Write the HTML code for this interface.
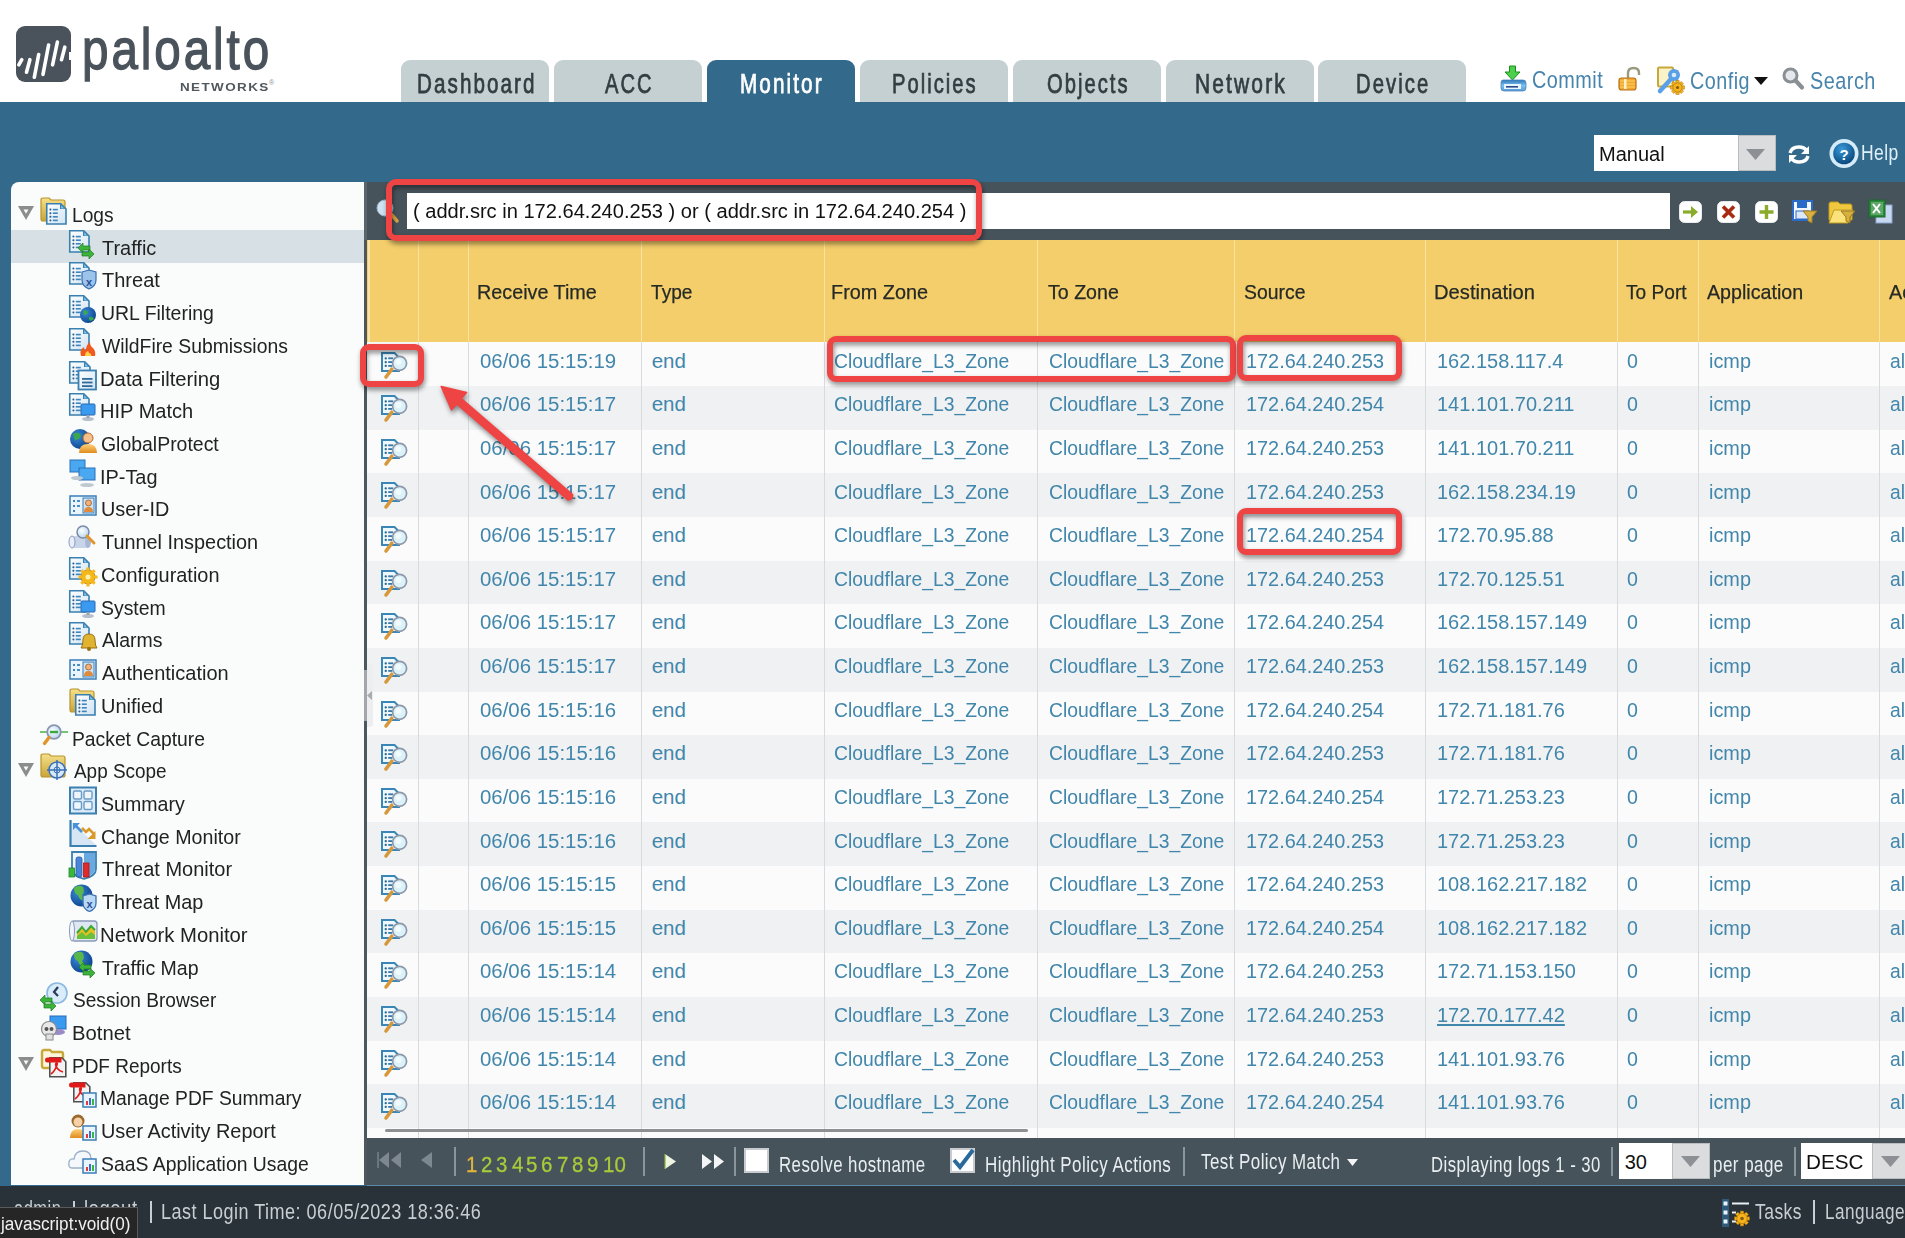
<!DOCTYPE html>
<html><head><meta charset='utf-8'><style>
html,body{margin:0;padding:0;}
body{width:1905px;height:1238px;overflow:hidden;position:relative;background:#fff;font-family:"Liberation Sans",sans-serif;}
.t{position:absolute;white-space:nowrap;line-height:0;transform-origin:0 0;}
svg{display:block}
</style></head><body>
<svg style='position:absolute;left:16px;top:26px;overflow:visible' width='55' height='56' viewBox='0 0 55 56'><rect x='0' y='0' width='55' height='56' rx='9' fill='#4a535b'/><line x1='2.8' y1='38.8' x2='5.8' y2='33.7' stroke='#ffffff' stroke-width='3.6' stroke-linecap='round'/><line x1='10.5' y1='46.2' x2='13.9' y2='33.7' stroke='#ffffff' stroke-width='3.6' stroke-linecap='round'/><line x1='18.3' y1='51.3' x2='22.7' y2='28.5' stroke='#ffffff' stroke-width='3.6' stroke-linecap='round'/><line x1='27' y1='48.4' x2='32.6' y2='19' stroke='#ffffff' stroke-width='3.6' stroke-linecap='round'/><line x1='36.6' y1='38.8' x2='41.4' y2='16' stroke='#ffffff' stroke-width='3.6' stroke-linecap='round'/><line x1='45.5' y1='33.7' x2='48.8' y2='21.2' stroke='#ffffff' stroke-width='3.6' stroke-linecap='round'/><rect x='53' y='26' width='4' height='8' fill='#ffffff'/></svg><div class='t' style='left:82.16px;top:49.00px;font-size:57px;font-weight:400;color:#4a535b;transform:scaleX(0.8349);letter-spacing:3.5px;-webkit-text-stroke:1.3px #4a535b;'>paloalto</div><div class='t' style='left:180.33px;top:87.00px;font-size:11.5px;font-weight:700;color:#50585e;transform:scaleX(1.1689);letter-spacing:1.2px;'>NETWORKS</div><div class='t' style='left:269.00px;top:83.00px;font-size:7px;font-weight:400;color:#8a9298;transform:scaleX(1.0000);'>®</div><div style='position:absolute;left:401px;top:60px;width:148px;height:43px;background:#c5d0d3;border-radius:9px 9px 0 0'></div><div class='t' style='left:416.53px;top:83.70px;font-size:28px;font-weight:400;color:#333d42;transform:scaleX(0.7372);letter-spacing:2.8px;-webkit-text-stroke:0.75px #333d42;'>Dashboard</div><div style='position:absolute;left:554px;top:60px;width:148px;height:43px;background:#c5d0d3;border-radius:9px 9px 0 0'></div><div class='t' style='left:605.40px;top:83.70px;font-size:28px;font-weight:400;color:#333d42;transform:scaleX(0.7188);letter-spacing:2.8px;-webkit-text-stroke:0.75px #333d42;'>ACC</div><div style='position:absolute;left:707px;top:60px;width:148px;height:43px;background:#336a8b;border-radius:9px 9px 0 0'></div><div class='t' style='left:739.82px;top:83.70px;font-size:28px;font-weight:400;color:#ffffff;transform:scaleX(0.7407);letter-spacing:2.8px;-webkit-text-stroke:0.75px #ffffff;'>Monitor</div><div style='position:absolute;left:860px;top:60px;width:148px;height:43px;background:#c5d0d3;border-radius:9px 9px 0 0'></div><div class='t' style='left:892.06px;top:83.70px;font-size:28px;font-weight:400;color:#333d42;transform:scaleX(0.7204);letter-spacing:2.8px;-webkit-text-stroke:0.75px #333d42;'>Policies</div><div style='position:absolute;left:1013px;top:60px;width:148px;height:43px;background:#c5d0d3;border-radius:9px 9px 0 0'></div><div class='t' style='left:1046.73px;top:83.70px;font-size:28px;font-weight:400;color:#333d42;transform:scaleX(0.7209);letter-spacing:2.8px;-webkit-text-stroke:0.75px #333d42;'>Objects</div><div style='position:absolute;left:1166px;top:60px;width:148px;height:43px;background:#c5d0d3;border-radius:9px 9px 0 0'></div><div class='t' style='left:1194.55px;top:83.70px;font-size:28px;font-weight:400;color:#333d42;transform:scaleX(0.7513);letter-spacing:2.8px;-webkit-text-stroke:0.75px #333d42;'>Network</div><div style='position:absolute;left:1318px;top:60px;width:148px;height:43px;background:#c5d0d3;border-radius:9px 9px 0 0'></div><div class='t' style='left:1356.30px;top:83.70px;font-size:28px;font-weight:400;color:#333d42;transform:scaleX(0.7247);letter-spacing:2.8px;-webkit-text-stroke:0.75px #333d42;'>Device</div><div class='t' style='left:1531.59px;top:80.00px;font-size:24.5px;font-weight:400;color:#4684ad;transform:scaleX(0.8093);letter-spacing:0.6px;'>Commit</div><div class='t' style='left:1690.39px;top:80.50px;font-size:24.5px;font-weight:400;color:#4684ad;transform:scaleX(0.8070);letter-spacing:0.6px;'>Config</div><div class='t' style='left:1809.69px;top:80.50px;font-size:24.5px;font-weight:400;color:#4684ad;transform:scaleX(0.8103);letter-spacing:0.6px;'>Search</div><div style='position:absolute;left:0px;top:102px;width:1905px;height:1084px;background:#336a8b;'></div><svg style='position:absolute;left:1500px;top:65px;overflow:visible' width='26' height='27' viewBox='0 0 26 27'><defs><linearGradient id='gtray' x1='0' y1='0' x2='0' y2='1'><stop offset='0' stop-color='#2f78b8'/><stop offset='.5' stop-color='#7ac0f0'/><stop offset='1' stop-color='#5a9ad0'/></linearGradient></defs><path d='M9.5,1 h6 v6 h4.5 l-7.5,8 l-7.5,-8 h4.5 z' fill='#4ad04a' stroke='#1f8a1f' stroke-width='1'/><path d='M3,15 h20 q3,0 3,3 v5 q0,3 -3,3 h-19 q-3,0 -3,-3 v-5 q0,-3 2,-3 z' fill='url(#gtray)' stroke='#4a88c0' stroke-width='.8'/><rect x='4' y='19' width='17' height='5' fill='#e8f6ff'/><rect x='6' y='21' width='12' height='1.6' fill='#2a4a8a'/></svg><svg style='position:absolute;left:1618px;top:67px;overflow:visible' width='24' height='24' viewBox='0 0 24 24'><path d='M10,11 v-5 q0,-5 5.5,-5 q5.5,0 5.5,5 v2' fill='none' stroke='#9a9a80' stroke-width='2.4'/><rect x='1' y='11' width='17' height='12' rx='2.5' fill='#f0a830' stroke='#b8701a' stroke-width='1.2'/><path d='M2,14 h15 M2,17 h15 M2,20 h15' stroke='#ffd060' stroke-width='1.2'/><rect x='6' y='12' width='2.5' height='10' fill='#fff2c8'/></svg><svg style='position:absolute;left:1657px;top:66px;overflow:visible' width='28' height='28' viewBox='0 0 28 28'><rect x='1' y='1.5' width='15' height='19' rx='1' fill='#fbf3c8' stroke='#c8a83a' stroke-width='2'/><path d='M20,4 v14' stroke='#c8a83a' stroke-width='2.5'/><path d='M3,25 l11,-12' stroke='#5aa0e8' stroke-width='4.5' stroke-linecap='round'/><circle cx='17' cy='9' r='6' fill='#5aa0e8'/><circle cx='17' cy='9' r='2.3' fill='#d8ecfc'/><rect x='18.9' y='14.7' width='3.2' height='4' fill='#f5b51a' stroke='#b87a10' stroke-width='.6' transform='rotate(0 20.5 21.5)'/><rect x='18.9' y='14.7' width='3.2' height='4' fill='#f5b51a' stroke='#b87a10' stroke-width='.6' transform='rotate(45 20.5 21.5)'/><rect x='18.9' y='14.7' width='3.2' height='4' fill='#f5b51a' stroke='#b87a10' stroke-width='.6' transform='rotate(90 20.5 21.5)'/><rect x='18.9' y='14.7' width='3.2' height='4' fill='#f5b51a' stroke='#b87a10' stroke-width='.6' transform='rotate(135 20.5 21.5)'/><rect x='18.9' y='14.7' width='3.2' height='4' fill='#f5b51a' stroke='#b87a10' stroke-width='.6' transform='rotate(180 20.5 21.5)'/><rect x='18.9' y='14.7' width='3.2' height='4' fill='#f5b51a' stroke='#b87a10' stroke-width='.6' transform='rotate(225 20.5 21.5)'/><rect x='18.9' y='14.7' width='3.2' height='4' fill='#f5b51a' stroke='#b87a10' stroke-width='.6' transform='rotate(270 20.5 21.5)'/><rect x='18.9' y='14.7' width='3.2' height='4' fill='#f5b51a' stroke='#b87a10' stroke-width='.6' transform='rotate(315 20.5 21.5)'/><circle cx='20.5' cy='21.5' r='4.6' fill='#f5b51a' stroke='#b87a10' stroke-width='.8'/><circle cx='20.5' cy='21.5' r='1.61' fill='#8a5a10'/></svg><svg style='position:absolute;left:1754px;top:77px;overflow:visible' width='14' height='8' viewBox='0 0 14 8'><path d='M0,0 h14 l-7,8 z' fill='#111'/></svg><svg style='position:absolute;left:1782px;top:67px;overflow:visible' width='22' height='23' viewBox='0 0 22 23'><circle cx='8.5' cy='8.5' r='6.5' fill='#e4e8ec' stroke='#8a8f94' stroke-width='3'/><path d='M13.5,13.5 l6.5,7' stroke='#8a8f94' stroke-width='4.2' stroke-linecap='round'/></svg><svg style='position:absolute;left:1787px;top:144.5px;overflow:visible' width='24' height='19' viewBox='0 0 24 19'><path d='M3,8 q1.5,-6 9,-6 q5,0 7.5,3.5' fill='none' stroke='#ffffff' stroke-width='3.4'/><path d='M22,1 v8 h-8 z' fill='#ffffff'/><path d='M21,11 q-1.5,6 -9,6 q-5,0 -7.5,-3.5' fill='none' stroke='#ffffff' stroke-width='3.4'/><path d='M2,18 v-8 h8 z' fill='#ffffff'/></svg><svg style='position:absolute;left:1829px;top:138.6px;overflow:visible' width='30' height='29' viewBox='0 0 30 29'><defs><radialGradient id='ghelp' cx='.4' cy='.3' r='.7'><stop offset='0' stop-color='#3a9ad8'/><stop offset='1' stop-color='#0a4a80'/></radialGradient></defs><circle cx='15' cy='14.5' r='14.5' fill='#d6ebf8'/><circle cx='15' cy='14.5' r='10.8' fill='url(#ghelp)'/><text x='15' y='21' font-family='Liberation Sans' font-weight='bold' font-size='15' fill='#ffffff' text-anchor='middle'>?</text></svg><div style='position:absolute;left:1594px;top:135px;width:144px;height:36px;background:#ffffff;'></div><div style='position:absolute;left:1738px;top:135px;width:38px;height:36px;background:#dadcdd;box-sizing:border-box;border:1px solid #b9bdc0'></div><svg style='position:absolute;left:1746px;top:149px;overflow:visible' width='19' height='11' viewBox='0 0 19 11'><path d='M0,0 h19 l-9.5,11 z' fill='#8c9094'/></svg><div class='t' style='left:1599.30px;top:153.80px;font-size:20px;font-weight:400;color:#111111;transform:scaleX(1.0016);'>Manual</div><div class='t' style='left:1861.44px;top:153.00px;font-size:22.5px;font-weight:400;color:#dff0fa;transform:scaleX(0.7778);letter-spacing:0.5px;'>Help</div><div style='position:absolute;left:11px;top:182px;width:353px;height:1003px;background:#fafbfb;border-radius:8px 0 0 0'></div><div style='position:absolute;left:11px;top:230px;width:353px;height:33px;background:#d7e0e5;'></div><div style='position:absolute;left:364px;top:182px;width:3px;height:1003px;background:#4c575e;'></div><svg style='position:absolute;left:0px;top:0px;overflow:visible' width='0' height='0' viewBox='0 0 0 0'><defs>
<linearGradient id='gdoc' x1='0' y1='0' x2='1' y2='1'><stop offset='0' stop-color='#ffffff'/><stop offset='1' stop-color='#cfe3f3'/></linearGradient>
<linearGradient id='gfold' x1='0' y1='0' x2='0' y2='1'><stop offset='0' stop-color='#f6e08a'/><stop offset='1' stop-color='#c9a53a'/></linearGradient>
<radialGradient id='gglobe' cx='.35' cy='.35' r='.75'><stop offset='0' stop-color='#3a8ad8'/><stop offset='1' stop-color='#0a3f88'/></radialGradient>
<radialGradient id='glens' cx='.4' cy='.4' r='.6'><stop offset='0' stop-color='#ffffff'/><stop offset='1' stop-color='#b8d8ee'/></radialGradient>
<linearGradient id='gorange' x1='0' y1='0' x2='0' y2='1'><stop offset='0' stop-color='#ffd27a'/><stop offset='1' stop-color='#e08a1e'/></linearGradient>
</defs></svg><svg style='position:absolute;left:40px;top:197px;overflow:visible' width='28' height='28' viewBox='0 0 28 28'><path d='M1,3 q0,-2 2,-2 h6 l2,2 h12 q2,0 2,2 v17 q0,2 -2,2 h-20 q-2,0 -2,-2 z' fill='url(#gfold)' stroke='#b8942c' stroke-width='1.2'/><path d='M6.75,6.75 h14 l5.25,5.25 v15 h-19.25 z' fill='url(#gdoc)' stroke='#3a80b0' stroke-width='1.6'/><path d='M20,6.75 v5.25 h5.25 z' fill='#3a80b0'/><path d='M21.3,8.6 v2.8 h2.6 z' fill='#8fd0f4'/><rect x='9.4' y='11.6' width='2' height='2' rx='.8' fill='#2f5f88'/><rect x='12.8' y='11.799999999999999' width='5' height='1.6' fill='#3f86bf'/><rect x='9.4' y='15.2' width='2' height='2' rx='.8' fill='#2f5f88'/><rect x='12.8' y='15.399999999999999' width='5' height='1.6' fill='#3f86bf'/><rect x='9.4' y='18.8' width='2' height='2' rx='.8' fill='#2f5f88'/><rect x='12.8' y='19.0' width='5' height='1.6' fill='#3f86bf'/><rect x='9.4' y='22.4' width='2' height='2' rx='.8' fill='#2f5f88'/><rect x='12.8' y='22.599999999999998' width='5' height='1.6' fill='#3f86bf'/></svg><svg style='position:absolute;left:18px;top:206px;overflow:visible' width='16' height='14' viewBox='0 0 16 14'><path d='M0,0 h16 l-8,14 z' fill='#8c8c8c'/><path d='M5.5,3.5 h5 l-2.5,4.2 z' fill='#fafbfb'/></svg><div class='t' style='left:71.93px;top:215.00px;font-size:20.5px;font-weight:400;color:#222222;transform:scaleX(0.9357);'>Logs</div><svg style='position:absolute;left:69px;top:230px;overflow:visible' width='28' height='28' viewBox='0 0 28 28'><path d='M0.75,0.75 h14 l5.25,5.25 v16 h-19.25 z' fill='url(#gdoc)' stroke='#3a80b0' stroke-width='1.6'/><path d='M14,0.75 v5.25 h5.25 z' fill='#3a80b0'/><path d='M15.3,2.6 v2.8 h2.6 z' fill='#8fd0f4'/><rect x='3.4' y='5.6' width='2' height='2' rx='.8' fill='#2f5f88'/><rect x='6.8' y='5.8' width='5' height='1.6' fill='#3f86bf'/><rect x='3.4' y='9.2' width='2' height='2' rx='.8' fill='#2f5f88'/><rect x='6.8' y='9.399999999999999' width='5' height='1.6' fill='#3f86bf'/><rect x='3.4' y='12.8' width='2' height='2' rx='.8' fill='#2f5f88'/><rect x='6.8' y='13.0' width='5' height='1.6' fill='#3f86bf'/><rect x='3.4' y='16.4' width='2' height='2' rx='.8' fill='#2f5f88'/><rect x='6.8' y='16.599999999999998' width='5' height='1.6' fill='#3f86bf'/><path d='M9,18 l5,-5 v3 h7 v4 h-7 v3 z' fill='#3cb43c' stroke='#1e7a1e' stroke-width='.7'/><path d='M25,24 l-5,-5 v3 h-7 v4 h7 v3 z' fill='#3cb43c' stroke='#1e7a1e' stroke-width='.7'/></svg><div class='t' style='left:102.20px;top:247.72px;font-size:20.5px;font-weight:400;color:#222222;transform:scaleX(0.9727);'>Traffic</div><svg style='position:absolute;left:69px;top:262px;overflow:visible' width='28' height='28' viewBox='0 0 28 28'><path d='M0.75,0.75 h14 l5.25,5.25 v16 h-19.25 z' fill='url(#gdoc)' stroke='#3a80b0' stroke-width='1.6'/><path d='M14,0.75 v5.25 h5.25 z' fill='#3a80b0'/><path d='M15.3,2.6 v2.8 h2.6 z' fill='#8fd0f4'/><rect x='3.4' y='5.6' width='2' height='2' rx='.8' fill='#2f5f88'/><rect x='6.8' y='5.8' width='5' height='1.6' fill='#3f86bf'/><rect x='3.4' y='9.2' width='2' height='2' rx='.8' fill='#2f5f88'/><rect x='6.8' y='9.399999999999999' width='5' height='1.6' fill='#3f86bf'/><rect x='3.4' y='12.8' width='2' height='2' rx='.8' fill='#2f5f88'/><rect x='6.8' y='13.0' width='5' height='1.6' fill='#3f86bf'/><rect x='3.4' y='16.4' width='2' height='2' rx='.8' fill='#2f5f88'/><rect x='6.8' y='16.599999999999998' width='5' height='1.6' fill='#3f86bf'/><path d='M13,10 l7,-2 l7,2 v8 q0,6 -7,9 q-7,-3 -7,-9 z' fill='#9cc4ea' stroke='#3a6fb0' stroke-width='1.2'/><text x='20' y='24' font-family='Liberation Sans' font-size='11' font-weight='bold' fill='#2a4f9a' text-anchor='middle'>x</text></svg><div class='t' style='left:102.20px;top:280.44px;font-size:20.5px;font-weight:400;color:#222222;transform:scaleX(0.9763);'>Threat</div><svg style='position:absolute;left:69px;top:295px;overflow:visible' width='28' height='28' viewBox='0 0 28 28'><path d='M0.75,0.75 h14 l5.25,5.25 v16 h-19.25 z' fill='url(#gdoc)' stroke='#3a80b0' stroke-width='1.6'/><path d='M14,0.75 v5.25 h5.25 z' fill='#3a80b0'/><path d='M15.3,2.6 v2.8 h2.6 z' fill='#8fd0f4'/><rect x='3.4' y='5.6' width='2' height='2' rx='.8' fill='#2f5f88'/><rect x='6.8' y='5.8' width='5' height='1.6' fill='#3f86bf'/><rect x='3.4' y='9.2' width='2' height='2' rx='.8' fill='#2f5f88'/><rect x='6.8' y='9.399999999999999' width='5' height='1.6' fill='#3f86bf'/><rect x='3.4' y='12.8' width='2' height='2' rx='.8' fill='#2f5f88'/><rect x='6.8' y='13.0' width='5' height='1.6' fill='#3f86bf'/><rect x='3.4' y='16.4' width='2' height='2' rx='.8' fill='#2f5f88'/><rect x='6.8' y='16.599999999999998' width='5' height='1.6' fill='#3f86bf'/><circle cx='19' cy='20' r='8' fill='url(#gglobe)'/><path d='M14,16 q3,-2 5,1 q-1,3 -4,3 z M20,22 q4,-1 5,2 q-3,3 -5,1 z' fill='#3aa84a'/></svg><div class='t' style='left:101.25px;top:313.16px;font-size:20.5px;font-weight:400;color:#222222;transform:scaleX(0.9496);'>URL Filtering</div><svg style='position:absolute;left:69px;top:328px;overflow:visible' width='28' height='28' viewBox='0 0 28 28'><path d='M0.75,0.75 h14 l5.25,5.25 v16 h-19.25 z' fill='url(#gdoc)' stroke='#3a80b0' stroke-width='1.6'/><path d='M14,0.75 v5.25 h5.25 z' fill='#3a80b0'/><path d='M15.3,2.6 v2.8 h2.6 z' fill='#8fd0f4'/><rect x='3.4' y='5.6' width='2' height='2' rx='.8' fill='#2f5f88'/><rect x='6.8' y='5.8' width='5' height='1.6' fill='#3f86bf'/><rect x='3.4' y='9.2' width='2' height='2' rx='.8' fill='#2f5f88'/><rect x='6.8' y='9.399999999999999' width='5' height='1.6' fill='#3f86bf'/><rect x='3.4' y='12.8' width='2' height='2' rx='.8' fill='#2f5f88'/><rect x='6.8' y='13.0' width='5' height='1.6' fill='#3f86bf'/><rect x='3.4' y='16.4' width='2' height='2' rx='.8' fill='#2f5f88'/><rect x='6.8' y='16.599999999999998' width='5' height='1.6' fill='#3f86bf'/><path d='M12,28 q-2,-6 3,-9 q0,3 2,3 q0,-5 4,-8 q0,4 3,6 q3,3 2,8 z' fill='#f05a1e'/><path d='M16,28 q0,-4 3,-5 q1,3 3,3 q1,2 0,2 z' fill='#ffd04a'/></svg><div class='t' style='left:102.20px;top:345.88px;font-size:20.5px;font-weight:400;color:#222222;transform:scaleX(0.9429);'>WildFire Submissions</div><svg style='position:absolute;left:69px;top:361px;overflow:visible' width='28' height='28' viewBox='0 0 28 28'><path d='M0.75,0.75 h15 l5.25,5.25 v16 h-20.25 z' fill='url(#gdoc)' stroke='#3a80b0' stroke-width='1.6'/><path d='M15,0.75 v5.25 h5.25 z' fill='#3a80b0'/><path d='M16.3,2.6 v2.8 h2.6 z' fill='#8fd0f4'/><rect x='3.4' y='5.6' width='2' height='2' rx='.8' fill='#2f5f88'/><rect x='6.8' y='5.8' width='5' height='1.6' fill='#3f86bf'/><rect x='3.4' y='9.2' width='2' height='2' rx='.8' fill='#2f5f88'/><rect x='6.8' y='9.399999999999999' width='5' height='1.6' fill='#3f86bf'/><rect x='3.4' y='12.8' width='2' height='2' rx='.8' fill='#2f5f88'/><rect x='6.8' y='13.0' width='5' height='1.6' fill='#3f86bf'/><rect x='3.4' y='16.4' width='2' height='2' rx='.8' fill='#2f5f88'/><rect x='6.8' y='16.599999999999998' width='5' height='1.6' fill='#3f86bf'/><rect x='9.5' y='9.5' width='17.5' height='19' fill='url(#gdoc)' stroke='#3a80b0' stroke-width='1.8'/><rect x='13' y='17' width='10.5' height='1.8' fill='#2f6a9a'/><rect x='13' y='20.6' width='10.5' height='1.8' fill='#2f6a9a'/><rect x='13' y='24.2' width='10.5' height='1.8' fill='#2f6a9a'/></svg><div class='t' style='left:100.23px;top:378.60px;font-size:20.5px;font-weight:400;color:#222222;transform:scaleX(0.9874);'>Data Filtering</div><svg style='position:absolute;left:69px;top:393px;overflow:visible' width='28' height='28' viewBox='0 0 28 28'><path d='M0.75,0.75 h14 l5.25,5.25 v16 h-19.25 z' fill='url(#gdoc)' stroke='#3a80b0' stroke-width='1.6'/><path d='M14,0.75 v5.25 h5.25 z' fill='#3a80b0'/><path d='M15.3,2.6 v2.8 h2.6 z' fill='#8fd0f4'/><rect x='3.4' y='5.6' width='2' height='2' rx='.8' fill='#2f5f88'/><rect x='6.8' y='5.8' width='5' height='1.6' fill='#3f86bf'/><rect x='3.4' y='9.2' width='2' height='2' rx='.8' fill='#2f5f88'/><rect x='6.8' y='9.399999999999999' width='5' height='1.6' fill='#3f86bf'/><rect x='3.4' y='12.8' width='2' height='2' rx='.8' fill='#2f5f88'/><rect x='6.8' y='13.0' width='5' height='1.6' fill='#3f86bf'/><rect x='3.4' y='16.4' width='2' height='2' rx='.8' fill='#2f5f88'/><rect x='6.8' y='16.599999999999998' width='5' height='1.6' fill='#3f86bf'/><rect x='12' y='11' width='14' height='11' rx='1' fill='#3a9af0' stroke='#2a6ab8' stroke-width='1'/><ellipse cx='19' cy='26' rx='6' ry='2' fill='#b8c0cc'/><rect x='17.5' y='22' width='3' height='3' fill='#9aa4b0'/></svg><div class='t' style='left:100.24px;top:411.32px;font-size:20.5px;font-weight:400;color:#222222;transform:scaleX(0.9783);'>HIP Match</div><svg style='position:absolute;left:69px;top:426px;overflow:visible' width='28' height='28' viewBox='0 0 28 28'><circle cx='11' cy='13' r='10' fill='url(#gglobe)'/><path d='M4,8 q5,-3 8,1 q-1,5 -6,5 z' fill='#3aa84a'/><circle cx='19' cy='12' r='5' fill='#f5c08a' stroke='#b86a2a' stroke-width='1'/><path d='M10,27 q0,-9 9,-9 q9,0 9,9 z' fill='url(#gorange)'/></svg><div class='t' style='left:101.25px;top:444.04px;font-size:20.5px;font-weight:400;color:#222222;transform:scaleX(0.9480);'>GlobalProtect</div><svg style='position:absolute;left:69px;top:459px;overflow:visible' width='28' height='28' viewBox='0 0 28 28'><rect x='1' y='1' width='15' height='12' fill='#4aa8f0' stroke='#2a70b8'/><rect x='10' y='9' width='16' height='12' fill='#4aa8f0' stroke='#2a70b8'/><ellipse cx='8' cy='19' rx='6' ry='2' fill='#c0c8d0'/><ellipse cx='18' cy='26' rx='7' ry='2' fill='#c0c8d0'/></svg><div class='t' style='left:100.26px;top:476.76px;font-size:20.5px;font-weight:400;color:#222222;transform:scaleX(0.9696);'>IP-Tag</div><svg style='position:absolute;left:69px;top:491px;overflow:visible' width='28' height='28' viewBox='0 0 28 28'><rect x='1' y='5' width='26' height='19' fill='#eaf4fc' stroke='#3a7fb8' stroke-width='1.5'/><rect x='4' y='9' width='2' height='2' fill='#4a80b8'/><rect x='4' y='14' width='2' height='2' fill='#4a80b8'/><rect x='4' y='19' width='2' height='2' fill='#4a80b8'/><rect x='8' y='9' width='3' height='2' fill='#4a90c8'/><rect x='8' y='14' width='3' height='2' fill='#4a90c8'/><rect x='14' y='7' width='11' height='15' fill='#cfe3f3' stroke='#3a7fb8'/><circle cx='19.5' cy='12' r='3' fill='#f0b27a' stroke='#9a5a2a' stroke-width='.8'/><path d='M15,21 q0,-5 4.5,-5 q4.5,0 4.5,5 z' fill='#e08a3a'/></svg><div class='t' style='left:101.23px;top:509.48px;font-size:20.5px;font-weight:400;color:#222222;transform:scaleX(0.9667);'>User-ID</div><svg style='position:absolute;left:69px;top:524px;overflow:visible' width='28' height='28' viewBox='0 0 28 28'><path d='M3,12 h16 v12 h-16 z' fill='#c8d4e8'/><ellipse cx='3' cy='18' rx='3' ry='6' fill='#e8eef8' stroke='#8a9ac0'/><ellipse cx='19' cy='18' rx='3' ry='6' fill='#aab8d8'/><circle cx='14' cy='8' r='6' fill='url(#glens)' stroke='#7a8aa8' stroke-width='1.5'/><path d='M18,12 l7,7' stroke='#e0962a' stroke-width='3' stroke-linecap='round'/></svg><div class='t' style='left:102.20px;top:542.20px;font-size:20.5px;font-weight:400;color:#222222;transform:scaleX(0.9694);'>Tunnel Inspection</div><svg style='position:absolute;left:69px;top:557px;overflow:visible' width='28' height='28' viewBox='0 0 28 28'><path d='M0.75,0.75 h14 l5.25,5.25 v16 h-19.25 z' fill='url(#gdoc)' stroke='#3a80b0' stroke-width='1.6'/><path d='M14,0.75 v5.25 h5.25 z' fill='#3a80b0'/><path d='M15.3,2.6 v2.8 h2.6 z' fill='#8fd0f4'/><rect x='3.4' y='5.6' width='2' height='2' rx='.8' fill='#2f5f88'/><rect x='6.8' y='5.8' width='5' height='1.6' fill='#3f86bf'/><rect x='3.4' y='9.2' width='2' height='2' rx='.8' fill='#2f5f88'/><rect x='6.8' y='9.399999999999999' width='5' height='1.6' fill='#3f86bf'/><rect x='3.4' y='12.8' width='2' height='2' rx='.8' fill='#2f5f88'/><rect x='6.8' y='13.0' width='5' height='1.6' fill='#3f86bf'/><rect x='3.4' y='16.4' width='2' height='2' rx='.8' fill='#2f5f88'/><rect x='6.8' y='16.599999999999998' width='5' height='1.6' fill='#3f86bf'/><circle cx='19' cy='20' r='7' fill='#f5b81a' stroke='#c07a10' stroke-width='1'/><circle cx='19' cy='20' r='2.5' fill='#fff2b0'/><rect x='17.5' y='10.5' width='3' height='4' fill='#f5b81a' transform='rotate(0 19 20)'/><rect x='17.5' y='10.5' width='3' height='4' fill='#f5b81a' transform='rotate(45 19 20)'/><rect x='17.5' y='10.5' width='3' height='4' fill='#f5b81a' transform='rotate(90 19 20)'/><rect x='17.5' y='10.5' width='3' height='4' fill='#f5b81a' transform='rotate(135 19 20)'/><rect x='17.5' y='10.5' width='3' height='4' fill='#f5b81a' transform='rotate(180 19 20)'/><rect x='17.5' y='10.5' width='3' height='4' fill='#f5b81a' transform='rotate(225 19 20)'/><rect x='17.5' y='10.5' width='3' height='4' fill='#f5b81a' transform='rotate(270 19 20)'/><rect x='17.5' y='10.5' width='3' height='4' fill='#f5b81a' transform='rotate(315 19 20)'/></svg><div class='t' style='left:101.23px;top:574.92px;font-size:20.5px;font-weight:400;color:#222222;transform:scaleX(0.9717);'>Configuration</div><svg style='position:absolute;left:69px;top:590px;overflow:visible' width='28' height='28' viewBox='0 0 28 28'><path d='M0.75,0.75 h14 l5.25,5.25 v16 h-19.25 z' fill='url(#gdoc)' stroke='#3a80b0' stroke-width='1.6'/><path d='M14,0.75 v5.25 h5.25 z' fill='#3a80b0'/><path d='M15.3,2.6 v2.8 h2.6 z' fill='#8fd0f4'/><rect x='3.4' y='5.6' width='2' height='2' rx='.8' fill='#2f5f88'/><rect x='6.8' y='5.8' width='5' height='1.6' fill='#3f86bf'/><rect x='3.4' y='9.2' width='2' height='2' rx='.8' fill='#2f5f88'/><rect x='6.8' y='9.399999999999999' width='5' height='1.6' fill='#3f86bf'/><rect x='3.4' y='12.8' width='2' height='2' rx='.8' fill='#2f5f88'/><rect x='6.8' y='13.0' width='5' height='1.6' fill='#3f86bf'/><rect x='3.4' y='16.4' width='2' height='2' rx='.8' fill='#2f5f88'/><rect x='6.8' y='16.599999999999998' width='5' height='1.6' fill='#3f86bf'/><rect x='12' y='11' width='14' height='11' rx='1' fill='#3a9af0' stroke='#2a6ab8' stroke-width='1'/><ellipse cx='19' cy='26' rx='6' ry='2' fill='#b8c0cc'/><rect x='17.5' y='22' width='3' height='3' fill='#9aa4b0'/></svg><div class='t' style='left:101.25px;top:607.64px;font-size:20.5px;font-weight:400;color:#222222;transform:scaleX(0.9470);'>System</div><svg style='position:absolute;left:69px;top:622px;overflow:visible' width='28' height='28' viewBox='0 0 28 28'><path d='M0.75,0.75 h14 l5.25,5.25 v16 h-19.25 z' fill='url(#gdoc)' stroke='#3a80b0' stroke-width='1.6'/><path d='M14,0.75 v5.25 h5.25 z' fill='#3a80b0'/><path d='M15.3,2.6 v2.8 h2.6 z' fill='#8fd0f4'/><rect x='3.4' y='5.6' width='2' height='2' rx='.8' fill='#2f5f88'/><rect x='6.8' y='5.8' width='5' height='1.6' fill='#3f86bf'/><rect x='3.4' y='9.2' width='2' height='2' rx='.8' fill='#2f5f88'/><rect x='6.8' y='9.399999999999999' width='5' height='1.6' fill='#3f86bf'/><rect x='3.4' y='12.8' width='2' height='2' rx='.8' fill='#2f5f88'/><rect x='6.8' y='13.0' width='5' height='1.6' fill='#3f86bf'/><rect x='3.4' y='16.4' width='2' height='2' rx='.8' fill='#2f5f88'/><rect x='6.8' y='16.599999999999998' width='5' height='1.6' fill='#3f86bf'/><path d='M12,26 q2,-2 2,-8 q0,-6 6,-6 q6,0 6,6 q0,6 2,8 z' fill='#e0b430' stroke='#9a7010' stroke-width='1'/><circle cx='20' cy='27' r='2' fill='#9a7010'/></svg><div class='t' style='left:102.20px;top:640.36px;font-size:20.5px;font-weight:400;color:#222222;transform:scaleX(0.9492);'>Alarms</div><svg style='position:absolute;left:69px;top:655px;overflow:visible' width='28' height='28' viewBox='0 0 28 28'><rect x='1' y='5' width='26' height='19' fill='#eaf4fc' stroke='#3a7fb8' stroke-width='1.5'/><rect x='4' y='9' width='2' height='2' fill='#4a80b8'/><rect x='4' y='14' width='2' height='2' fill='#4a80b8'/><rect x='4' y='19' width='2' height='2' fill='#4a80b8'/><rect x='8' y='9' width='3' height='2' fill='#4a90c8'/><rect x='8' y='14' width='3' height='2' fill='#4a90c8'/><rect x='14' y='7' width='11' height='15' fill='#cfe3f3' stroke='#3a7fb8'/><circle cx='19.5' cy='12' r='3' fill='#f0b27a' stroke='#9a5a2a' stroke-width='.8'/><path d='M15,21 q0,-5 4.5,-5 q4.5,0 4.5,5 z' fill='#e08a3a'/></svg><div class='t' style='left:102.20px;top:673.08px;font-size:20.5px;font-weight:400;color:#222222;transform:scaleX(0.9744);'>Authentication</div><svg style='position:absolute;left:69px;top:688px;overflow:visible' width='28' height='28' viewBox='0 0 28 28'><path d='M1,3 q0,-2 2,-2 h6 l2,2 h12 q2,0 2,2 v17 q0,2 -2,2 h-20 q-2,0 -2,-2 z' fill='url(#gfold)' stroke='#b8942c' stroke-width='1.2'/><path d='M6.75,6.75 h14 l5.25,5.25 v15 h-19.25 z' fill='url(#gdoc)' stroke='#3a80b0' stroke-width='1.6'/><path d='M20,6.75 v5.25 h5.25 z' fill='#3a80b0'/><path d='M21.3,8.6 v2.8 h2.6 z' fill='#8fd0f4'/><rect x='9.4' y='11.6' width='2' height='2' rx='.8' fill='#2f5f88'/><rect x='12.8' y='11.799999999999999' width='5' height='1.6' fill='#3f86bf'/><rect x='9.4' y='15.2' width='2' height='2' rx='.8' fill='#2f5f88'/><rect x='12.8' y='15.399999999999999' width='5' height='1.6' fill='#3f86bf'/><rect x='9.4' y='18.8' width='2' height='2' rx='.8' fill='#2f5f88'/><rect x='12.8' y='19.0' width='5' height='1.6' fill='#3f86bf'/><rect x='9.4' y='22.4' width='2' height='2' rx='.8' fill='#2f5f88'/><rect x='12.8' y='22.599999999999998' width='5' height='1.6' fill='#3f86bf'/></svg><div class='t' style='left:101.23px;top:705.80px;font-size:20.5px;font-weight:400;color:#222222;transform:scaleX(0.9726);'>Unified</div><svg style='position:absolute;left:40px;top:721px;overflow:visible' width='28' height='28' viewBox='0 0 28 28'><path d='M0,11 h28' stroke='#4ab04a' stroke-width='1.5'/><circle cx='14' cy='11' r='6.8' fill='url(#glens)' stroke='#8a96b0' stroke-width='1.8'/><path d='M10,11 h8' stroke='#3aa83a' stroke-width='2.4'/><path d='M9,16.5 l-4.5,6' stroke='#e0962a' stroke-width='3.4' stroke-linecap='round'/></svg><div class='t' style='left:71.92px;top:738.52px;font-size:20.5px;font-weight:400;color:#222222;transform:scaleX(0.9410);'>Packet Capture</div><svg style='position:absolute;left:40px;top:753px;overflow:visible' width='28' height='28' viewBox='0 0 28 28'><path d='M1,3 q0,-2 2,-2 h6 l2,2 h12 q2,0 2,2 v17 q0,2 -2,2 h-20 q-2,0 -2,-2 z' fill='url(#gfold)' stroke='#b8942c' stroke-width='1.2'/><circle cx='17' cy='17' r='8' fill='#d8e8f6' stroke='#3a70b8' stroke-width='1.5'/><path d='M17,7 v20 M7,17 h20' stroke='#3a70b8' stroke-width='1.5'/><circle cx='17' cy='17' r='3' fill='none' stroke='#3a70b8'/></svg><svg style='position:absolute;left:18px;top:763px;overflow:visible' width='16' height='14' viewBox='0 0 16 14'><path d='M0,0 h16 l-8,14 z' fill='#8c8c8c'/><path d='M5.5,3.5 h5 l-2.5,4.2 z' fill='#fafbfb'/></svg><div class='t' style='left:73.80px;top:771.24px;font-size:20.5px;font-weight:400;color:#222222;transform:scaleX(0.9230);'>App Scope</div><svg style='position:absolute;left:69px;top:786px;overflow:visible' width='28' height='28' viewBox='0 0 28 28'><rect x='1' y='1.5' width='26' height='26' fill='#dcebf7' stroke='#3a80b0' stroke-width='2'/><rect x='4.5' y='5.0' width='8' height='8' rx='1.5' fill='#eef6fc' stroke='#6a9cc8' stroke-width='1.4'/><rect x='4.5' y='15.5' width='8' height='8' rx='1.5' fill='#eef6fc' stroke='#6a9cc8' stroke-width='1.4'/><rect x='15.0' y='5.0' width='8' height='8' rx='1.5' fill='#eef6fc' stroke='#6a9cc8' stroke-width='1.4'/><rect x='15.0' y='15.5' width='8' height='8' rx='1.5' fill='#eef6fc' stroke='#6a9cc8' stroke-width='1.4'/></svg><div class='t' style='left:101.24px;top:803.96px;font-size:20.5px;font-weight:400;color:#222222;transform:scaleX(0.9552);'>Summary</div><svg style='position:absolute;left:69px;top:819px;overflow:visible' width='28' height='28' viewBox='0 0 28 28'><path d='M2,2 L27,26 H2 Z' fill='#d6e6f4'/><path d='M1.5,1 v26 h26' fill='none' stroke='#3a80b0' stroke-width='2.2'/><path d='M13,13 L6,6' stroke='#4a90d8' stroke-width='2.6'/><path d='M4,4 h7 l-7,7 z' fill='#4a90d8'/><path d='M13,9 l4,4 l3,-3 l5,5' fill='none' stroke='#d89a2a' stroke-width='2.6'/><path d='M26.5,12 v8 h-8 z' fill='#d89a2a'/></svg><div class='t' style='left:101.24px;top:836.68px;font-size:20.5px;font-weight:400;color:#222222;transform:scaleX(0.9579);'>Change Monitor</div><svg style='position:absolute;left:69px;top:851px;overflow:visible' width='28' height='28' viewBox='0 0 28 28'><path d='M3,1 h24 v17 q0,7 -12,10 q-12,-3 -12,-10 z' fill='#eef6fc' stroke='#3a80b0' stroke-width='1.8'/><path d='M15,2 h11 v16 q0,6 -11,9 z' fill='#6aa8e0'/><rect x='0' y='17' width='5.5' height='9' fill='#3ab83a' stroke='#1e8a2a' stroke-width='.8'/><rect x='7' y='6' width='6' height='20' rx='2' fill='#4a86d8' stroke='#2a5aa8' stroke-width='.8'/><rect x='14.5' y='12' width='5.5' height='14' fill='#e02a2a' stroke='#a81a1a' stroke-width='.8'/></svg><div class='t' style='left:102.20px;top:869.40px;font-size:20.5px;font-weight:400;color:#222222;transform:scaleX(0.9759);'>Threat Monitor</div><svg style='position:absolute;left:69px;top:884px;overflow:visible' width='28' height='28' viewBox='0 0 28 28'><circle cx='12.5' cy='11.5' r='11' fill='url(#gglobe)'/><path d='M5,4 q5,-4 9,-1 q2,5 -1,8 q3,3 1,6 q-4,-2 -5,-6 q-4,-1 -4,-7 z' fill='#5ab84a'/><path d='M14,12 l6.5,-2 l6.5,2 v7 q0,6 -6.5,8.5 q-6.5,-2.5 -6.5,-8.5 z' fill='#b8d8f4' stroke='#3a6fb0' stroke-width='1.3'/><text x='20.5' y='24' font-family='Liberation Sans' font-size='11' font-weight='bold' fill='#2a4f9a' text-anchor='middle'>x</text></svg><div class='t' style='left:102.20px;top:902.12px;font-size:20.5px;font-weight:400;color:#222222;transform:scaleX(0.9673);'>Threat Map</div><svg style='position:absolute;left:69px;top:917px;overflow:visible' width='28' height='28' viewBox='0 0 28 28'><rect x='2' y='4' width='26' height='20' rx='3' fill='#dfe8f2' stroke='#8a9ab8' stroke-width='1.3'/><ellipse cx='3' cy='14' rx='2.5' ry='10' fill='#f2f6fa' stroke='#8a9ab8'/><path d='M8,22 v-6 l5,-6 l4,5 l5,-6 l4,4 v9 z' fill='#e8c020'/><path d='M8,16 l5,-6 l4,5 l5,-6 l4,4' fill='none' stroke='#3aa83a' stroke-width='2'/><path d='M8,22 v-3 l5,-4 l4,4 l5,-4 l4,3 v4 z' fill='#6ac03a'/></svg><div class='t' style='left:100.22px;top:934.84px;font-size:20.5px;font-weight:400;color:#222222;transform:scaleX(0.9891);'>Network Monitor</div><svg style='position:absolute;left:69px;top:950px;overflow:visible' width='28' height='28' viewBox='0 0 28 28'><circle cx='12.5' cy='11.5' r='11' fill='url(#gglobe)'/><path d='M5,4 q5,-4 9,-1 q2,5 -1,8 q3,3 1,6 q-4,-2 -5,-6 q-4,-1 -4,-7 z' fill='#5ab84a'/><path d='M10,17 l5,-5 v3 h7 v4 h-7 v3 z' fill='#3cb43c' stroke='#1e7a1e' stroke-width='.7'/><path d='M26,23 l-5,-5 v3 h-7 v4 h7 v3 z' fill='#3cb43c' stroke='#1e7a1e' stroke-width='.7'/></svg><div class='t' style='left:102.20px;top:967.56px;font-size:20.5px;font-weight:400;color:#222222;transform:scaleX(0.9525);'>Traffic Map</div><svg style='position:absolute;left:40px;top:982px;overflow:visible' width='28' height='28' viewBox='0 0 28 28'><circle cx='17' cy='11' r='10' fill='#d8ecfa' stroke='#8ab8e0' stroke-width='1.6'/><path d='M18,5 l-4,5 l4,4' fill='none' stroke='#2a3a5a' stroke-width='2.2'/><path d='M0,18 l5,-5 v3 h7 v4 h-7 v3 z' fill='#3cb43c' stroke='#1e7a1e' stroke-width='.7'/><path d='M16,24 l-5,-5 v3 h-7 v4 h7 v3 z' fill='#3cb43c' stroke='#1e7a1e' stroke-width='.7'/></svg><div class='t' style='left:72.87px;top:1000.28px;font-size:20.5px;font-weight:400;color:#222222;transform:scaleX(0.9314);'>Session Browser</div><svg style='position:absolute;left:40px;top:1015px;overflow:visible' width='28' height='28' viewBox='0 0 28 28'><rect x='10' y='1' width='16' height='13' fill='#3a9af0' stroke='#2a6ab8'/><ellipse cx='18' cy='17' rx='7' ry='3' fill='#9a8ac8'/><circle cx='9' cy='14' r='7.5' fill='#e8e8e8' stroke='#8a8a8a' stroke-width='1.2'/><rect x='6' y='19' width='7' height='6' fill='#e0e0e0' stroke='#8a8a8a'/><circle cx='6.5' cy='14' r='2' fill='#555'/><circle cx='11.5' cy='14' r='2' fill='#555'/></svg><div class='t' style='left:71.82px;top:1033.00px;font-size:20.5px;font-weight:400;color:#222222;transform:scaleX(0.9877);'>Botnet</div><svg style='position:absolute;left:40px;top:1048px;overflow:visible' width='28' height='28' viewBox='0 0 28 28'><path d='M2,4 q0,-2 2,-2 h6 l2,2 h9 q2,0 2,2 v12 q0,2 -2,2 h-17 q-2,0 -2,-2 z' fill='#fbf6dc' stroke='#c8a838' stroke-width='2.4'/><path d='M9.8,9.8 h12 l4,4 v15 h-16 z' fill='#f2f2f2' stroke='#505050' stroke-width='1.6'/><path d='M5,12 q0,-2.5 2.5,-2.5 h14 v5 h-14 q-2.5,0 -2.5,-2.5 z' fill='#e01a1a'/><path d='M11,26 q4,-3 6,-9 q1,-3 -1,-2 q-1,2 1,5 q2,3 6,4' fill='none' stroke='#e01a1a' stroke-width='1.6'/></svg><svg style='position:absolute;left:18px;top:1057px;overflow:visible' width='16' height='14' viewBox='0 0 16 14'><path d='M0,0 h16 l-8,14 z' fill='#8c8c8c'/><path d='M5.5,3.5 h5 l-2.5,4.2 z' fill='#fafbfb'/></svg><div class='t' style='left:71.95px;top:1065.72px;font-size:20.5px;font-weight:400;color:#222222;transform:scaleX(0.9259);'>PDF Reports</div><svg style='position:absolute;left:69px;top:1080px;overflow:visible' width='28' height='28' viewBox='0 0 28 28'><path d='M4.8,2.8 h12 l4,4 v15 h-16 z' fill='#f2f2f2' stroke='#505050' stroke-width='1.6'/><path d='M0,5 q0,-2.5 2.5,-2.5 h14 v5 h-14 q-2.5,0 -2.5,-2.5 z' fill='#e01a1a'/><path d='M6,19 q4,-3 6,-9 q1,-3 -1,-2 q-1,2 1,5 q2,3 6,4' fill='none' stroke='#e01a1a' stroke-width='1.6'/><rect x='14' y='13' width='13' height='14' fill='#eaf4fc' stroke='#3a7fb8' stroke-width='1.5'/><rect x='17' y='21' width='2' height='4' fill='#e03a3a'/><rect x='20' y='18' width='2' height='7' fill='#3a70c8'/><rect x='23' y='19' width='2' height='6' fill='#3ab83a'/></svg><div class='t' style='left:100.32px;top:1098.44px;font-size:20.5px;font-weight:400;color:#222222;transform:scaleX(0.9406);'>Manage PDF Summary</div><svg style='position:absolute;left:69px;top:1113px;overflow:visible' width='28' height='28' viewBox='0 0 28 28'><circle cx='9' cy='8' r='6.5' fill='#9a6a2a'/><circle cx='9' cy='9' r='4.5' fill='#f5d0a8'/><path d='M1,25 q0,-9 8,-9 q8,0 8,9 z' fill='url(#gorange)'/><rect x='14' y='13' width='13' height='14' fill='#eaf4fc' stroke='#3a7fb8' stroke-width='1.5'/><rect x='17' y='21' width='2' height='4' fill='#e03a3a'/><rect x='20' y='18' width='2' height='7' fill='#3a70c8'/><rect x='23' y='19' width='2' height='6' fill='#3ab83a'/></svg><div class='t' style='left:101.23px;top:1131.16px;font-size:20.5px;font-weight:400;color:#222222;transform:scaleX(0.9704);'>User Activity Report</div><svg style='position:absolute;left:69px;top:1146px;overflow:visible' width='28' height='28' viewBox='0 0 28 28'><path d='M3,22 q-4,0 -3,-6 q1,-4 5,-3 q1,-8 9,-8 q8,0 8,8 q5,0 5,5 q0,4 -4,4 z' fill='#f4f8fc' stroke='#9ab0c8' stroke-width='1.3'/><rect x='14' y='13' width='13' height='14' fill='#eaf4fc' stroke='#3a7fb8' stroke-width='1.5'/><rect x='17' y='21' width='2' height='4' fill='#e03a3a'/><rect x='20' y='18' width='2' height='7' fill='#3a70c8'/><rect x='23' y='19' width='2' height='6' fill='#3ab83a'/></svg><div class='t' style='left:101.26px;top:1163.88px;font-size:20.5px;font-weight:400;color:#222222;transform:scaleX(0.9450);'>SaaS Application Usage</div><div style='position:absolute;left:367px;top:182px;width:1538px;height:58px;background:#47535b;'></div><div style='position:absolute;left:407px;top:193px;width:1263px;height:36px;background:#ffffff;'></div><svg style='position:absolute;left:376px;top:199px;overflow:visible' width='22' height='24' viewBox='0 0 22 24'><circle cx='9' cy='9' r='8' fill='#cfe2f2' stroke='#9ab4cc' stroke-width='1'/><path d='M15,15 l6,7' stroke='#d8a040' stroke-width='3.5' stroke-linecap='round'/></svg><svg style='position:absolute;left:1679px;top:200.5px;overflow:visible' width='23' height='22' viewBox='0 0 23 22'><rect x='.5' y='.5' width='22' height='21' rx='5' fill='#ffffff' stroke='#e8ecee' stroke-width='1'/><path d='M4,11 h10' stroke='#8aac2a' stroke-width='3.2'/><path d='M12,5 l7,6 l-7,6 z' fill='#8aac2a'/></svg><svg style='position:absolute;left:1717px;top:200.5px;overflow:visible' width='23' height='22' viewBox='0 0 23 22'><rect x='.5' y='.5' width='22' height='21' rx='5' fill='#ffffff' stroke='#e8ecee' stroke-width='1'/><path d='M6,5.5 l11,11 M17,5.5 l-11,11' stroke='#a82a10' stroke-width='3.6'/></svg><svg style='position:absolute;left:1755px;top:200.5px;overflow:visible' width='23' height='22' viewBox='0 0 23 22'><rect x='.5' y='.5' width='22' height='21' rx='5' fill='#ffffff' stroke='#e8ecee' stroke-width='1'/><path d='M11.5,4 v14 M4.5,11 h14' stroke='#8aac2a' stroke-width='3.4'/></svg><svg style='position:absolute;left:1792px;top:200px;overflow:visible' width='25' height='24' viewBox='0 0 25 24'><rect x='1' y='1' width='19' height='19' fill='#f4f8fc' stroke='#2a6ac8' stroke-width='2'/><rect x='5' y='2' width='10' height='6' fill='#2a6ac8'/><rect x='4' y='11' width='13' height='8' fill='#dde8f6' stroke='#2a6ac8'/><path d='M11,11 h14 l-5,6 v6 l-4,-2 v-4 z' fill='#d8b040' stroke='#9a7a20' stroke-width='1'/></svg><svg style='position:absolute;left:1828px;top:198.5px;overflow:visible' width='28' height='26' viewBox='0 0 28 26'><path d='M1,5 q0,-2 2,-2 h7 l2,2 h10 q2,0 2,2 v14 h-23 z' fill='#f0c840' stroke='#c09a20' stroke-width='1'/><path d='M1,24 l5,-13 h19 l-5,13 z' fill='#fbe27a' stroke='#c09a20' stroke-width='1'/><path d='M13,12 h14 l-5,6 v6 l-4,-2 v-4 z' fill='#d8b040' stroke='#9a7a20' stroke-width='1'/></svg><svg style='position:absolute;left:1868px;top:198.5px;overflow:visible' width='25' height='25' viewBox='0 0 25 25'><rect x='8' y='6' width='16' height='18' fill='#c8d8f0' stroke='#8aa4d0' stroke-width='1'/><rect x='1' y='1' width='16' height='17' fill='#2a8a3a' stroke='#1a6a2a' stroke-width='1'/><rect x='3' y='3' width='12' height='13' fill='#ffffff' opacity='.25'/><path d='M5,5 l7,9 M12,5 l-7,9' stroke='#ffffff' stroke-width='2'/></svg><div class='t' style='left:413.00px;top:210.60px;font-size:20px;font-weight:400;color:#111111;transform:scaleX(1.0036);'>( addr.src in 172.64.240.253 ) or ( addr.src in 172.64.240.254 )</div><div style='position:absolute;left:367px;top:240px;width:1538px;height:102px;background:#f4ce6b;'></div><div style='position:absolute;left:368px;top:240px;width:2px;height:102px;background:#f9e4a6;'></div><div style='position:absolute;left:364px;top:182px;width:3px;height:58px;background:#5a656b;'></div><div style='position:absolute;left:418px;top:240px;width:1px;height:102px;background:#f9e2a2;'></div><div style='position:absolute;left:468px;top:240px;width:1px;height:102px;background:#f9e2a2;'></div><div style='position:absolute;left:641px;top:240px;width:1px;height:102px;background:#f9e2a2;'></div><div style='position:absolute;left:824px;top:240px;width:1px;height:102px;background:#f9e2a2;'></div><div style='position:absolute;left:1037px;top:240px;width:1px;height:102px;background:#f9e2a2;'></div><div style='position:absolute;left:1234px;top:240px;width:1px;height:102px;background:#f9e2a2;'></div><div style='position:absolute;left:1425px;top:240px;width:1px;height:102px;background:#f9e2a2;'></div><div style='position:absolute;left:1617px;top:240px;width:1px;height:102px;background:#f9e2a2;'></div><div style='position:absolute;left:1698px;top:240px;width:1px;height:102px;background:#f9e2a2;'></div><div style='position:absolute;left:1879px;top:240px;width:1px;height:102px;background:#f9e2a2;'></div><div class='t' style='left:476.72px;top:292.00px;font-size:21px;font-weight:400;color:#262a26;transform:scaleX(0.9419);-webkit-text-stroke:0.25px #262a26;'>Receive Time</div><div class='t' style='left:650.80px;top:292.00px;font-size:21px;font-weight:400;color:#262a26;transform:scaleX(0.9111);-webkit-text-stroke:0.25px #262a26;'>Type</div><div class='t' style='left:831.11px;top:292.00px;font-size:21px;font-weight:400;color:#262a26;transform:scaleX(0.9460);-webkit-text-stroke:0.25px #262a26;'>From Zone</div><div class='t' style='left:1047.60px;top:292.00px;font-size:21px;font-weight:400;color:#262a26;transform:scaleX(0.9333);-webkit-text-stroke:0.25px #262a26;'>To Zone</div><div class='t' style='left:1243.58px;top:292.00px;font-size:21px;font-weight:400;color:#262a26;transform:scaleX(0.9231);-webkit-text-stroke:0.25px #262a26;'>Source</div><div class='t' style='left:1433.78px;top:292.00px;font-size:21px;font-weight:400;color:#262a26;transform:scaleX(0.9608);-webkit-text-stroke:0.25px #262a26;'>Destination</div><div class='t' style='left:1626.30px;top:292.00px;font-size:21px;font-weight:400;color:#262a26;transform:scaleX(0.9104);-webkit-text-stroke:0.25px #262a26;'>To Port</div><div class='t' style='left:1707.00px;top:292.00px;font-size:21px;font-weight:400;color:#262a26;transform:scaleX(0.9363);-webkit-text-stroke:0.25px #262a26;'>Application</div><div class='t' style='left:1888.80px;top:292.00px;font-size:21px;font-weight:400;color:#262a26;transform:scaleX(0.9400);-webkit-text-stroke:0.25px #262a26;'>Ac</div><div style='position:absolute;left:367px;top:342px;width:1538px;height:796px;background:#fbfbfb;'></div><div style='position:absolute;left:367px;top:386px;width:1538px;height:44px;background:#eff1f3;'></div><div style='position:absolute;left:367px;top:473px;width:1538px;height:44px;background:#eff1f3;'></div><div style='position:absolute;left:367px;top:561px;width:1538px;height:43px;background:#eff1f3;'></div><div style='position:absolute;left:367px;top:648px;width:1538px;height:44px;background:#eff1f3;'></div><div style='position:absolute;left:367px;top:735px;width:1538px;height:44px;background:#eff1f3;'></div><div style='position:absolute;left:367px;top:822px;width:1538px;height:44px;background:#eff1f3;'></div><div style='position:absolute;left:367px;top:910px;width:1538px;height:43px;background:#eff1f3;'></div><div style='position:absolute;left:367px;top:997px;width:1538px;height:44px;background:#eff1f3;'></div><div style='position:absolute;left:367px;top:1084px;width:1538px;height:44px;background:#eff1f3;'></div><div style='position:absolute;left:418px;top:342px;width:1px;height:796px;background:#d8dbdd;'></div><div style='position:absolute;left:468px;top:342px;width:1px;height:796px;background:#d8dbdd;'></div><div style='position:absolute;left:641px;top:342px;width:1px;height:796px;background:#d8dbdd;'></div><div style='position:absolute;left:824px;top:342px;width:1px;height:796px;background:#d8dbdd;'></div><div style='position:absolute;left:1037px;top:342px;width:1px;height:796px;background:#d8dbdd;'></div><div style='position:absolute;left:1234px;top:342px;width:1px;height:796px;background:#d8dbdd;'></div><div style='position:absolute;left:1425px;top:342px;width:1px;height:796px;background:#d8dbdd;'></div><div style='position:absolute;left:1617px;top:342px;width:1px;height:796px;background:#d8dbdd;'></div><div style='position:absolute;left:1698px;top:342px;width:1px;height:796px;background:#d8dbdd;'></div><div style='position:absolute;left:1879px;top:342px;width:1px;height:796px;background:#d8dbdd;'></div><div class='t' style='left:479.81px;top:360.70px;font-size:20.5px;font-weight:400;color:#4186ab;transform:scaleX(0.9950);'>06/06 15:15:19</div><div class='t' style='left:651.70px;top:360.70px;font-size:20.5px;font-weight:400;color:#4186ab;transform:scaleX(1.0000);'>end</div><div class='t' style='left:834.46px;top:360.70px;font-size:20.5px;font-weight:400;color:#4186ab;transform:scaleX(0.9435);'>Cloudflare_L3_Zone</div><div class='t' style='left:1049.06px;top:360.70px;font-size:20.5px;font-weight:400;color:#4186ab;transform:scaleX(0.9435);'>Cloudflare_L3_Zone</div><div class='t' style='left:1246.03px;top:360.70px;font-size:20.5px;font-weight:400;color:#4186ab;transform:scaleX(0.9688);'>172.64.240.253</div><div class='t' style='left:1437.03px;top:360.70px;font-size:20.5px;font-weight:400;color:#4186ab;transform:scaleX(0.9750);'>162.158.117.4</div><div class='t' style='left:1627.04px;top:360.70px;font-size:20.5px;font-weight:400;color:#4186ab;transform:scaleX(0.9580);'>0</div><div class='t' style='left:1708.73px;top:360.70px;font-size:20.5px;font-weight:400;color:#4186ab;transform:scaleX(0.9690);'>icmp</div><div class='t' style='left:1889.66px;top:360.70px;font-size:20.5px;font-weight:400;color:#4186ab;transform:scaleX(0.9400);'>al</div><svg style='position:absolute;left:381px;top:352px;overflow:visible' width='27' height='27' viewBox='0 0 27 27'><path d='M1,1 h12.5 l4.5,4.5 v13.5 h-17 z' fill='#eef8fd' stroke='#3a86b6' stroke-width='2'/><rect x='3.6' y='5.2' width='2.3' height='2.3' rx='1' fill='#2f6a8a'/><rect x='3.6' y='9' width='2.3' height='2.3' rx='1' fill='#2f6a8a'/><rect x='3.6' y='12.8' width='2.3' height='2.3' rx='1' fill='#2f6a8a'/><rect x='7.2' y='5.4' width='5' height='1.8' fill='#3a78a8'/><rect x='7.2' y='9.2' width='4' height='1.8' fill='#3a78a8'/><rect x='7.2' y='13' width='4' height='1.8' fill='#3a78a8'/><path d='M10.8,17.2 L5,25' stroke='#d6983a' stroke-width='3.6' stroke-linecap='round'/><circle cx='18.6' cy='11.3' r='7' fill='#dcf2fb' stroke='#8d97a6' stroke-width='1.7'/><circle cx='17.5' cy='10' r='3' fill='#ffffff' opacity='.6'/></svg><div class='t' style='left:479.81px;top:404.32px;font-size:20.5px;font-weight:400;color:#4186ab;transform:scaleX(0.9950);'>06/06 15:15:17</div><div class='t' style='left:651.70px;top:404.32px;font-size:20.5px;font-weight:400;color:#4186ab;transform:scaleX(1.0000);'>end</div><div class='t' style='left:834.46px;top:404.32px;font-size:20.5px;font-weight:400;color:#4186ab;transform:scaleX(0.9435);'>Cloudflare_L3_Zone</div><div class='t' style='left:1049.06px;top:404.32px;font-size:20.5px;font-weight:400;color:#4186ab;transform:scaleX(0.9435);'>Cloudflare_L3_Zone</div><div class='t' style='left:1246.03px;top:404.32px;font-size:20.5px;font-weight:400;color:#4186ab;transform:scaleX(0.9688);'>172.64.240.254</div><div class='t' style='left:1437.03px;top:404.32px;font-size:20.5px;font-weight:400;color:#4186ab;transform:scaleX(0.9750);'>141.101.70.211</div><div class='t' style='left:1627.04px;top:404.32px;font-size:20.5px;font-weight:400;color:#4186ab;transform:scaleX(0.9580);'>0</div><div class='t' style='left:1708.73px;top:404.32px;font-size:20.5px;font-weight:400;color:#4186ab;transform:scaleX(0.9690);'>icmp</div><div class='t' style='left:1889.66px;top:404.32px;font-size:20.5px;font-weight:400;color:#4186ab;transform:scaleX(0.9400);'>al</div><svg style='position:absolute;left:381px;top:395px;overflow:visible' width='27' height='27' viewBox='0 0 27 27'><path d='M1,1 h12.5 l4.5,4.5 v13.5 h-17 z' fill='#eef8fd' stroke='#3a86b6' stroke-width='2'/><rect x='3.6' y='5.2' width='2.3' height='2.3' rx='1' fill='#2f6a8a'/><rect x='3.6' y='9' width='2.3' height='2.3' rx='1' fill='#2f6a8a'/><rect x='3.6' y='12.8' width='2.3' height='2.3' rx='1' fill='#2f6a8a'/><rect x='7.2' y='5.4' width='5' height='1.8' fill='#3a78a8'/><rect x='7.2' y='9.2' width='4' height='1.8' fill='#3a78a8'/><rect x='7.2' y='13' width='4' height='1.8' fill='#3a78a8'/><path d='M10.8,17.2 L5,25' stroke='#d6983a' stroke-width='3.6' stroke-linecap='round'/><circle cx='18.6' cy='11.3' r='7' fill='#dcf2fb' stroke='#8d97a6' stroke-width='1.7'/><circle cx='17.5' cy='10' r='3' fill='#ffffff' opacity='.6'/></svg><div class='t' style='left:479.81px;top:447.94px;font-size:20.5px;font-weight:400;color:#4186ab;transform:scaleX(0.9950);'>06/06 15:15:17</div><div class='t' style='left:651.70px;top:447.94px;font-size:20.5px;font-weight:400;color:#4186ab;transform:scaleX(1.0000);'>end</div><div class='t' style='left:834.46px;top:447.94px;font-size:20.5px;font-weight:400;color:#4186ab;transform:scaleX(0.9435);'>Cloudflare_L3_Zone</div><div class='t' style='left:1049.06px;top:447.94px;font-size:20.5px;font-weight:400;color:#4186ab;transform:scaleX(0.9435);'>Cloudflare_L3_Zone</div><div class='t' style='left:1246.03px;top:447.94px;font-size:20.5px;font-weight:400;color:#4186ab;transform:scaleX(0.9688);'>172.64.240.253</div><div class='t' style='left:1437.03px;top:447.94px;font-size:20.5px;font-weight:400;color:#4186ab;transform:scaleX(0.9750);'>141.101.70.211</div><div class='t' style='left:1627.04px;top:447.94px;font-size:20.5px;font-weight:400;color:#4186ab;transform:scaleX(0.9580);'>0</div><div class='t' style='left:1708.73px;top:447.94px;font-size:20.5px;font-weight:400;color:#4186ab;transform:scaleX(0.9690);'>icmp</div><div class='t' style='left:1889.66px;top:447.94px;font-size:20.5px;font-weight:400;color:#4186ab;transform:scaleX(0.9400);'>al</div><svg style='position:absolute;left:381px;top:439px;overflow:visible' width='27' height='27' viewBox='0 0 27 27'><path d='M1,1 h12.5 l4.5,4.5 v13.5 h-17 z' fill='#eef8fd' stroke='#3a86b6' stroke-width='2'/><rect x='3.6' y='5.2' width='2.3' height='2.3' rx='1' fill='#2f6a8a'/><rect x='3.6' y='9' width='2.3' height='2.3' rx='1' fill='#2f6a8a'/><rect x='3.6' y='12.8' width='2.3' height='2.3' rx='1' fill='#2f6a8a'/><rect x='7.2' y='5.4' width='5' height='1.8' fill='#3a78a8'/><rect x='7.2' y='9.2' width='4' height='1.8' fill='#3a78a8'/><rect x='7.2' y='13' width='4' height='1.8' fill='#3a78a8'/><path d='M10.8,17.2 L5,25' stroke='#d6983a' stroke-width='3.6' stroke-linecap='round'/><circle cx='18.6' cy='11.3' r='7' fill='#dcf2fb' stroke='#8d97a6' stroke-width='1.7'/><circle cx='17.5' cy='10' r='3' fill='#ffffff' opacity='.6'/></svg><div class='t' style='left:479.81px;top:491.56px;font-size:20.5px;font-weight:400;color:#4186ab;transform:scaleX(0.9950);'>06/06 15:15:17</div><div class='t' style='left:651.70px;top:491.56px;font-size:20.5px;font-weight:400;color:#4186ab;transform:scaleX(1.0000);'>end</div><div class='t' style='left:834.46px;top:491.56px;font-size:20.5px;font-weight:400;color:#4186ab;transform:scaleX(0.9435);'>Cloudflare_L3_Zone</div><div class='t' style='left:1049.06px;top:491.56px;font-size:20.5px;font-weight:400;color:#4186ab;transform:scaleX(0.9435);'>Cloudflare_L3_Zone</div><div class='t' style='left:1246.03px;top:491.56px;font-size:20.5px;font-weight:400;color:#4186ab;transform:scaleX(0.9688);'>172.64.240.253</div><div class='t' style='left:1437.03px;top:491.56px;font-size:20.5px;font-weight:400;color:#4186ab;transform:scaleX(0.9750);'>162.158.234.19</div><div class='t' style='left:1627.04px;top:491.56px;font-size:20.5px;font-weight:400;color:#4186ab;transform:scaleX(0.9580);'>0</div><div class='t' style='left:1708.73px;top:491.56px;font-size:20.5px;font-weight:400;color:#4186ab;transform:scaleX(0.9690);'>icmp</div><div class='t' style='left:1889.66px;top:491.56px;font-size:20.5px;font-weight:400;color:#4186ab;transform:scaleX(0.9400);'>al</div><svg style='position:absolute;left:381px;top:482px;overflow:visible' width='27' height='27' viewBox='0 0 27 27'><path d='M1,1 h12.5 l4.5,4.5 v13.5 h-17 z' fill='#eef8fd' stroke='#3a86b6' stroke-width='2'/><rect x='3.6' y='5.2' width='2.3' height='2.3' rx='1' fill='#2f6a8a'/><rect x='3.6' y='9' width='2.3' height='2.3' rx='1' fill='#2f6a8a'/><rect x='3.6' y='12.8' width='2.3' height='2.3' rx='1' fill='#2f6a8a'/><rect x='7.2' y='5.4' width='5' height='1.8' fill='#3a78a8'/><rect x='7.2' y='9.2' width='4' height='1.8' fill='#3a78a8'/><rect x='7.2' y='13' width='4' height='1.8' fill='#3a78a8'/><path d='M10.8,17.2 L5,25' stroke='#d6983a' stroke-width='3.6' stroke-linecap='round'/><circle cx='18.6' cy='11.3' r='7' fill='#dcf2fb' stroke='#8d97a6' stroke-width='1.7'/><circle cx='17.5' cy='10' r='3' fill='#ffffff' opacity='.6'/></svg><div class='t' style='left:479.81px;top:535.18px;font-size:20.5px;font-weight:400;color:#4186ab;transform:scaleX(0.9950);'>06/06 15:15:17</div><div class='t' style='left:651.70px;top:535.18px;font-size:20.5px;font-weight:400;color:#4186ab;transform:scaleX(1.0000);'>end</div><div class='t' style='left:834.46px;top:535.18px;font-size:20.5px;font-weight:400;color:#4186ab;transform:scaleX(0.9435);'>Cloudflare_L3_Zone</div><div class='t' style='left:1049.06px;top:535.18px;font-size:20.5px;font-weight:400;color:#4186ab;transform:scaleX(0.9435);'>Cloudflare_L3_Zone</div><div class='t' style='left:1246.03px;top:535.18px;font-size:20.5px;font-weight:400;color:#4186ab;transform:scaleX(0.9688);'>172.64.240.254</div><div class='t' style='left:1437.03px;top:535.18px;font-size:20.5px;font-weight:400;color:#4186ab;transform:scaleX(0.9750);'>172.70.95.88</div><div class='t' style='left:1627.04px;top:535.18px;font-size:20.5px;font-weight:400;color:#4186ab;transform:scaleX(0.9580);'>0</div><div class='t' style='left:1708.73px;top:535.18px;font-size:20.5px;font-weight:400;color:#4186ab;transform:scaleX(0.9690);'>icmp</div><div class='t' style='left:1889.66px;top:535.18px;font-size:20.5px;font-weight:400;color:#4186ab;transform:scaleX(0.9400);'>al</div><svg style='position:absolute;left:381px;top:526px;overflow:visible' width='27' height='27' viewBox='0 0 27 27'><path d='M1,1 h12.5 l4.5,4.5 v13.5 h-17 z' fill='#eef8fd' stroke='#3a86b6' stroke-width='2'/><rect x='3.6' y='5.2' width='2.3' height='2.3' rx='1' fill='#2f6a8a'/><rect x='3.6' y='9' width='2.3' height='2.3' rx='1' fill='#2f6a8a'/><rect x='3.6' y='12.8' width='2.3' height='2.3' rx='1' fill='#2f6a8a'/><rect x='7.2' y='5.4' width='5' height='1.8' fill='#3a78a8'/><rect x='7.2' y='9.2' width='4' height='1.8' fill='#3a78a8'/><rect x='7.2' y='13' width='4' height='1.8' fill='#3a78a8'/><path d='M10.8,17.2 L5,25' stroke='#d6983a' stroke-width='3.6' stroke-linecap='round'/><circle cx='18.6' cy='11.3' r='7' fill='#dcf2fb' stroke='#8d97a6' stroke-width='1.7'/><circle cx='17.5' cy='10' r='3' fill='#ffffff' opacity='.6'/></svg><div class='t' style='left:479.81px;top:578.80px;font-size:20.5px;font-weight:400;color:#4186ab;transform:scaleX(0.9950);'>06/06 15:15:17</div><div class='t' style='left:651.70px;top:578.80px;font-size:20.5px;font-weight:400;color:#4186ab;transform:scaleX(1.0000);'>end</div><div class='t' style='left:834.46px;top:578.80px;font-size:20.5px;font-weight:400;color:#4186ab;transform:scaleX(0.9435);'>Cloudflare_L3_Zone</div><div class='t' style='left:1049.06px;top:578.80px;font-size:20.5px;font-weight:400;color:#4186ab;transform:scaleX(0.9435);'>Cloudflare_L3_Zone</div><div class='t' style='left:1246.03px;top:578.80px;font-size:20.5px;font-weight:400;color:#4186ab;transform:scaleX(0.9688);'>172.64.240.253</div><div class='t' style='left:1437.03px;top:578.80px;font-size:20.5px;font-weight:400;color:#4186ab;transform:scaleX(0.9750);'>172.70.125.51</div><div class='t' style='left:1627.04px;top:578.80px;font-size:20.5px;font-weight:400;color:#4186ab;transform:scaleX(0.9580);'>0</div><div class='t' style='left:1708.73px;top:578.80px;font-size:20.5px;font-weight:400;color:#4186ab;transform:scaleX(0.9690);'>icmp</div><div class='t' style='left:1889.66px;top:578.80px;font-size:20.5px;font-weight:400;color:#4186ab;transform:scaleX(0.9400);'>al</div><svg style='position:absolute;left:381px;top:570px;overflow:visible' width='27' height='27' viewBox='0 0 27 27'><path d='M1,1 h12.5 l4.5,4.5 v13.5 h-17 z' fill='#eef8fd' stroke='#3a86b6' stroke-width='2'/><rect x='3.6' y='5.2' width='2.3' height='2.3' rx='1' fill='#2f6a8a'/><rect x='3.6' y='9' width='2.3' height='2.3' rx='1' fill='#2f6a8a'/><rect x='3.6' y='12.8' width='2.3' height='2.3' rx='1' fill='#2f6a8a'/><rect x='7.2' y='5.4' width='5' height='1.8' fill='#3a78a8'/><rect x='7.2' y='9.2' width='4' height='1.8' fill='#3a78a8'/><rect x='7.2' y='13' width='4' height='1.8' fill='#3a78a8'/><path d='M10.8,17.2 L5,25' stroke='#d6983a' stroke-width='3.6' stroke-linecap='round'/><circle cx='18.6' cy='11.3' r='7' fill='#dcf2fb' stroke='#8d97a6' stroke-width='1.7'/><circle cx='17.5' cy='10' r='3' fill='#ffffff' opacity='.6'/></svg><div class='t' style='left:479.81px;top:622.42px;font-size:20.5px;font-weight:400;color:#4186ab;transform:scaleX(0.9950);'>06/06 15:15:17</div><div class='t' style='left:651.70px;top:622.42px;font-size:20.5px;font-weight:400;color:#4186ab;transform:scaleX(1.0000);'>end</div><div class='t' style='left:834.46px;top:622.42px;font-size:20.5px;font-weight:400;color:#4186ab;transform:scaleX(0.9435);'>Cloudflare_L3_Zone</div><div class='t' style='left:1049.06px;top:622.42px;font-size:20.5px;font-weight:400;color:#4186ab;transform:scaleX(0.9435);'>Cloudflare_L3_Zone</div><div class='t' style='left:1246.03px;top:622.42px;font-size:20.5px;font-weight:400;color:#4186ab;transform:scaleX(0.9688);'>172.64.240.254</div><div class='t' style='left:1437.03px;top:622.42px;font-size:20.5px;font-weight:400;color:#4186ab;transform:scaleX(0.9750);'>162.158.157.149</div><div class='t' style='left:1627.04px;top:622.42px;font-size:20.5px;font-weight:400;color:#4186ab;transform:scaleX(0.9580);'>0</div><div class='t' style='left:1708.73px;top:622.42px;font-size:20.5px;font-weight:400;color:#4186ab;transform:scaleX(0.9690);'>icmp</div><div class='t' style='left:1889.66px;top:622.42px;font-size:20.5px;font-weight:400;color:#4186ab;transform:scaleX(0.9400);'>al</div><svg style='position:absolute;left:381px;top:613px;overflow:visible' width='27' height='27' viewBox='0 0 27 27'><path d='M1,1 h12.5 l4.5,4.5 v13.5 h-17 z' fill='#eef8fd' stroke='#3a86b6' stroke-width='2'/><rect x='3.6' y='5.2' width='2.3' height='2.3' rx='1' fill='#2f6a8a'/><rect x='3.6' y='9' width='2.3' height='2.3' rx='1' fill='#2f6a8a'/><rect x='3.6' y='12.8' width='2.3' height='2.3' rx='1' fill='#2f6a8a'/><rect x='7.2' y='5.4' width='5' height='1.8' fill='#3a78a8'/><rect x='7.2' y='9.2' width='4' height='1.8' fill='#3a78a8'/><rect x='7.2' y='13' width='4' height='1.8' fill='#3a78a8'/><path d='M10.8,17.2 L5,25' stroke='#d6983a' stroke-width='3.6' stroke-linecap='round'/><circle cx='18.6' cy='11.3' r='7' fill='#dcf2fb' stroke='#8d97a6' stroke-width='1.7'/><circle cx='17.5' cy='10' r='3' fill='#ffffff' opacity='.6'/></svg><div class='t' style='left:479.81px;top:666.04px;font-size:20.5px;font-weight:400;color:#4186ab;transform:scaleX(0.9950);'>06/06 15:15:17</div><div class='t' style='left:651.70px;top:666.04px;font-size:20.5px;font-weight:400;color:#4186ab;transform:scaleX(1.0000);'>end</div><div class='t' style='left:834.46px;top:666.04px;font-size:20.5px;font-weight:400;color:#4186ab;transform:scaleX(0.9435);'>Cloudflare_L3_Zone</div><div class='t' style='left:1049.06px;top:666.04px;font-size:20.5px;font-weight:400;color:#4186ab;transform:scaleX(0.9435);'>Cloudflare_L3_Zone</div><div class='t' style='left:1246.03px;top:666.04px;font-size:20.5px;font-weight:400;color:#4186ab;transform:scaleX(0.9688);'>172.64.240.253</div><div class='t' style='left:1437.03px;top:666.04px;font-size:20.5px;font-weight:400;color:#4186ab;transform:scaleX(0.9750);'>162.158.157.149</div><div class='t' style='left:1627.04px;top:666.04px;font-size:20.5px;font-weight:400;color:#4186ab;transform:scaleX(0.9580);'>0</div><div class='t' style='left:1708.73px;top:666.04px;font-size:20.5px;font-weight:400;color:#4186ab;transform:scaleX(0.9690);'>icmp</div><div class='t' style='left:1889.66px;top:666.04px;font-size:20.5px;font-weight:400;color:#4186ab;transform:scaleX(0.9400);'>al</div><svg style='position:absolute;left:381px;top:657px;overflow:visible' width='27' height='27' viewBox='0 0 27 27'><path d='M1,1 h12.5 l4.5,4.5 v13.5 h-17 z' fill='#eef8fd' stroke='#3a86b6' stroke-width='2'/><rect x='3.6' y='5.2' width='2.3' height='2.3' rx='1' fill='#2f6a8a'/><rect x='3.6' y='9' width='2.3' height='2.3' rx='1' fill='#2f6a8a'/><rect x='3.6' y='12.8' width='2.3' height='2.3' rx='1' fill='#2f6a8a'/><rect x='7.2' y='5.4' width='5' height='1.8' fill='#3a78a8'/><rect x='7.2' y='9.2' width='4' height='1.8' fill='#3a78a8'/><rect x='7.2' y='13' width='4' height='1.8' fill='#3a78a8'/><path d='M10.8,17.2 L5,25' stroke='#d6983a' stroke-width='3.6' stroke-linecap='round'/><circle cx='18.6' cy='11.3' r='7' fill='#dcf2fb' stroke='#8d97a6' stroke-width='1.7'/><circle cx='17.5' cy='10' r='3' fill='#ffffff' opacity='.6'/></svg><div class='t' style='left:479.81px;top:709.66px;font-size:20.5px;font-weight:400;color:#4186ab;transform:scaleX(0.9950);'>06/06 15:15:16</div><div class='t' style='left:651.70px;top:709.66px;font-size:20.5px;font-weight:400;color:#4186ab;transform:scaleX(1.0000);'>end</div><div class='t' style='left:834.46px;top:709.66px;font-size:20.5px;font-weight:400;color:#4186ab;transform:scaleX(0.9435);'>Cloudflare_L3_Zone</div><div class='t' style='left:1049.06px;top:709.66px;font-size:20.5px;font-weight:400;color:#4186ab;transform:scaleX(0.9435);'>Cloudflare_L3_Zone</div><div class='t' style='left:1246.03px;top:709.66px;font-size:20.5px;font-weight:400;color:#4186ab;transform:scaleX(0.9688);'>172.64.240.254</div><div class='t' style='left:1437.03px;top:709.66px;font-size:20.5px;font-weight:400;color:#4186ab;transform:scaleX(0.9750);'>172.71.181.76</div><div class='t' style='left:1627.04px;top:709.66px;font-size:20.5px;font-weight:400;color:#4186ab;transform:scaleX(0.9580);'>0</div><div class='t' style='left:1708.73px;top:709.66px;font-size:20.5px;font-weight:400;color:#4186ab;transform:scaleX(0.9690);'>icmp</div><div class='t' style='left:1889.66px;top:709.66px;font-size:20.5px;font-weight:400;color:#4186ab;transform:scaleX(0.9400);'>al</div><svg style='position:absolute;left:381px;top:701px;overflow:visible' width='27' height='27' viewBox='0 0 27 27'><path d='M1,1 h12.5 l4.5,4.5 v13.5 h-17 z' fill='#eef8fd' stroke='#3a86b6' stroke-width='2'/><rect x='3.6' y='5.2' width='2.3' height='2.3' rx='1' fill='#2f6a8a'/><rect x='3.6' y='9' width='2.3' height='2.3' rx='1' fill='#2f6a8a'/><rect x='3.6' y='12.8' width='2.3' height='2.3' rx='1' fill='#2f6a8a'/><rect x='7.2' y='5.4' width='5' height='1.8' fill='#3a78a8'/><rect x='7.2' y='9.2' width='4' height='1.8' fill='#3a78a8'/><rect x='7.2' y='13' width='4' height='1.8' fill='#3a78a8'/><path d='M10.8,17.2 L5,25' stroke='#d6983a' stroke-width='3.6' stroke-linecap='round'/><circle cx='18.6' cy='11.3' r='7' fill='#dcf2fb' stroke='#8d97a6' stroke-width='1.7'/><circle cx='17.5' cy='10' r='3' fill='#ffffff' opacity='.6'/></svg><div class='t' style='left:479.81px;top:753.28px;font-size:20.5px;font-weight:400;color:#4186ab;transform:scaleX(0.9950);'>06/06 15:15:16</div><div class='t' style='left:651.70px;top:753.28px;font-size:20.5px;font-weight:400;color:#4186ab;transform:scaleX(1.0000);'>end</div><div class='t' style='left:834.46px;top:753.28px;font-size:20.5px;font-weight:400;color:#4186ab;transform:scaleX(0.9435);'>Cloudflare_L3_Zone</div><div class='t' style='left:1049.06px;top:753.28px;font-size:20.5px;font-weight:400;color:#4186ab;transform:scaleX(0.9435);'>Cloudflare_L3_Zone</div><div class='t' style='left:1246.03px;top:753.28px;font-size:20.5px;font-weight:400;color:#4186ab;transform:scaleX(0.9688);'>172.64.240.253</div><div class='t' style='left:1437.03px;top:753.28px;font-size:20.5px;font-weight:400;color:#4186ab;transform:scaleX(0.9750);'>172.71.181.76</div><div class='t' style='left:1627.04px;top:753.28px;font-size:20.5px;font-weight:400;color:#4186ab;transform:scaleX(0.9580);'>0</div><div class='t' style='left:1708.73px;top:753.28px;font-size:20.5px;font-weight:400;color:#4186ab;transform:scaleX(0.9690);'>icmp</div><div class='t' style='left:1889.66px;top:753.28px;font-size:20.5px;font-weight:400;color:#4186ab;transform:scaleX(0.9400);'>al</div><svg style='position:absolute;left:381px;top:744px;overflow:visible' width='27' height='27' viewBox='0 0 27 27'><path d='M1,1 h12.5 l4.5,4.5 v13.5 h-17 z' fill='#eef8fd' stroke='#3a86b6' stroke-width='2'/><rect x='3.6' y='5.2' width='2.3' height='2.3' rx='1' fill='#2f6a8a'/><rect x='3.6' y='9' width='2.3' height='2.3' rx='1' fill='#2f6a8a'/><rect x='3.6' y='12.8' width='2.3' height='2.3' rx='1' fill='#2f6a8a'/><rect x='7.2' y='5.4' width='5' height='1.8' fill='#3a78a8'/><rect x='7.2' y='9.2' width='4' height='1.8' fill='#3a78a8'/><rect x='7.2' y='13' width='4' height='1.8' fill='#3a78a8'/><path d='M10.8,17.2 L5,25' stroke='#d6983a' stroke-width='3.6' stroke-linecap='round'/><circle cx='18.6' cy='11.3' r='7' fill='#dcf2fb' stroke='#8d97a6' stroke-width='1.7'/><circle cx='17.5' cy='10' r='3' fill='#ffffff' opacity='.6'/></svg><div class='t' style='left:479.81px;top:796.90px;font-size:20.5px;font-weight:400;color:#4186ab;transform:scaleX(0.9950);'>06/06 15:15:16</div><div class='t' style='left:651.70px;top:796.90px;font-size:20.5px;font-weight:400;color:#4186ab;transform:scaleX(1.0000);'>end</div><div class='t' style='left:834.46px;top:796.90px;font-size:20.5px;font-weight:400;color:#4186ab;transform:scaleX(0.9435);'>Cloudflare_L3_Zone</div><div class='t' style='left:1049.06px;top:796.90px;font-size:20.5px;font-weight:400;color:#4186ab;transform:scaleX(0.9435);'>Cloudflare_L3_Zone</div><div class='t' style='left:1246.03px;top:796.90px;font-size:20.5px;font-weight:400;color:#4186ab;transform:scaleX(0.9688);'>172.64.240.254</div><div class='t' style='left:1437.03px;top:796.90px;font-size:20.5px;font-weight:400;color:#4186ab;transform:scaleX(0.9750);'>172.71.253.23</div><div class='t' style='left:1627.04px;top:796.90px;font-size:20.5px;font-weight:400;color:#4186ab;transform:scaleX(0.9580);'>0</div><div class='t' style='left:1708.73px;top:796.90px;font-size:20.5px;font-weight:400;color:#4186ab;transform:scaleX(0.9690);'>icmp</div><div class='t' style='left:1889.66px;top:796.90px;font-size:20.5px;font-weight:400;color:#4186ab;transform:scaleX(0.9400);'>al</div><svg style='position:absolute;left:381px;top:788px;overflow:visible' width='27' height='27' viewBox='0 0 27 27'><path d='M1,1 h12.5 l4.5,4.5 v13.5 h-17 z' fill='#eef8fd' stroke='#3a86b6' stroke-width='2'/><rect x='3.6' y='5.2' width='2.3' height='2.3' rx='1' fill='#2f6a8a'/><rect x='3.6' y='9' width='2.3' height='2.3' rx='1' fill='#2f6a8a'/><rect x='3.6' y='12.8' width='2.3' height='2.3' rx='1' fill='#2f6a8a'/><rect x='7.2' y='5.4' width='5' height='1.8' fill='#3a78a8'/><rect x='7.2' y='9.2' width='4' height='1.8' fill='#3a78a8'/><rect x='7.2' y='13' width='4' height='1.8' fill='#3a78a8'/><path d='M10.8,17.2 L5,25' stroke='#d6983a' stroke-width='3.6' stroke-linecap='round'/><circle cx='18.6' cy='11.3' r='7' fill='#dcf2fb' stroke='#8d97a6' stroke-width='1.7'/><circle cx='17.5' cy='10' r='3' fill='#ffffff' opacity='.6'/></svg><div class='t' style='left:479.81px;top:840.52px;font-size:20.5px;font-weight:400;color:#4186ab;transform:scaleX(0.9950);'>06/06 15:15:16</div><div class='t' style='left:651.70px;top:840.52px;font-size:20.5px;font-weight:400;color:#4186ab;transform:scaleX(1.0000);'>end</div><div class='t' style='left:834.46px;top:840.52px;font-size:20.5px;font-weight:400;color:#4186ab;transform:scaleX(0.9435);'>Cloudflare_L3_Zone</div><div class='t' style='left:1049.06px;top:840.52px;font-size:20.5px;font-weight:400;color:#4186ab;transform:scaleX(0.9435);'>Cloudflare_L3_Zone</div><div class='t' style='left:1246.03px;top:840.52px;font-size:20.5px;font-weight:400;color:#4186ab;transform:scaleX(0.9688);'>172.64.240.253</div><div class='t' style='left:1437.03px;top:840.52px;font-size:20.5px;font-weight:400;color:#4186ab;transform:scaleX(0.9750);'>172.71.253.23</div><div class='t' style='left:1627.04px;top:840.52px;font-size:20.5px;font-weight:400;color:#4186ab;transform:scaleX(0.9580);'>0</div><div class='t' style='left:1708.73px;top:840.52px;font-size:20.5px;font-weight:400;color:#4186ab;transform:scaleX(0.9690);'>icmp</div><div class='t' style='left:1889.66px;top:840.52px;font-size:20.5px;font-weight:400;color:#4186ab;transform:scaleX(0.9400);'>al</div><svg style='position:absolute;left:381px;top:831px;overflow:visible' width='27' height='27' viewBox='0 0 27 27'><path d='M1,1 h12.5 l4.5,4.5 v13.5 h-17 z' fill='#eef8fd' stroke='#3a86b6' stroke-width='2'/><rect x='3.6' y='5.2' width='2.3' height='2.3' rx='1' fill='#2f6a8a'/><rect x='3.6' y='9' width='2.3' height='2.3' rx='1' fill='#2f6a8a'/><rect x='3.6' y='12.8' width='2.3' height='2.3' rx='1' fill='#2f6a8a'/><rect x='7.2' y='5.4' width='5' height='1.8' fill='#3a78a8'/><rect x='7.2' y='9.2' width='4' height='1.8' fill='#3a78a8'/><rect x='7.2' y='13' width='4' height='1.8' fill='#3a78a8'/><path d='M10.8,17.2 L5,25' stroke='#d6983a' stroke-width='3.6' stroke-linecap='round'/><circle cx='18.6' cy='11.3' r='7' fill='#dcf2fb' stroke='#8d97a6' stroke-width='1.7'/><circle cx='17.5' cy='10' r='3' fill='#ffffff' opacity='.6'/></svg><div class='t' style='left:479.81px;top:884.14px;font-size:20.5px;font-weight:400;color:#4186ab;transform:scaleX(0.9950);'>06/06 15:15:15</div><div class='t' style='left:651.70px;top:884.14px;font-size:20.5px;font-weight:400;color:#4186ab;transform:scaleX(1.0000);'>end</div><div class='t' style='left:834.46px;top:884.14px;font-size:20.5px;font-weight:400;color:#4186ab;transform:scaleX(0.9435);'>Cloudflare_L3_Zone</div><div class='t' style='left:1049.06px;top:884.14px;font-size:20.5px;font-weight:400;color:#4186ab;transform:scaleX(0.9435);'>Cloudflare_L3_Zone</div><div class='t' style='left:1246.03px;top:884.14px;font-size:20.5px;font-weight:400;color:#4186ab;transform:scaleX(0.9688);'>172.64.240.253</div><div class='t' style='left:1437.03px;top:884.14px;font-size:20.5px;font-weight:400;color:#4186ab;transform:scaleX(0.9750);'>108.162.217.182</div><div class='t' style='left:1627.04px;top:884.14px;font-size:20.5px;font-weight:400;color:#4186ab;transform:scaleX(0.9580);'>0</div><div class='t' style='left:1708.73px;top:884.14px;font-size:20.5px;font-weight:400;color:#4186ab;transform:scaleX(0.9690);'>icmp</div><div class='t' style='left:1889.66px;top:884.14px;font-size:20.5px;font-weight:400;color:#4186ab;transform:scaleX(0.9400);'>al</div><svg style='position:absolute;left:381px;top:875px;overflow:visible' width='27' height='27' viewBox='0 0 27 27'><path d='M1,1 h12.5 l4.5,4.5 v13.5 h-17 z' fill='#eef8fd' stroke='#3a86b6' stroke-width='2'/><rect x='3.6' y='5.2' width='2.3' height='2.3' rx='1' fill='#2f6a8a'/><rect x='3.6' y='9' width='2.3' height='2.3' rx='1' fill='#2f6a8a'/><rect x='3.6' y='12.8' width='2.3' height='2.3' rx='1' fill='#2f6a8a'/><rect x='7.2' y='5.4' width='5' height='1.8' fill='#3a78a8'/><rect x='7.2' y='9.2' width='4' height='1.8' fill='#3a78a8'/><rect x='7.2' y='13' width='4' height='1.8' fill='#3a78a8'/><path d='M10.8,17.2 L5,25' stroke='#d6983a' stroke-width='3.6' stroke-linecap='round'/><circle cx='18.6' cy='11.3' r='7' fill='#dcf2fb' stroke='#8d97a6' stroke-width='1.7'/><circle cx='17.5' cy='10' r='3' fill='#ffffff' opacity='.6'/></svg><div class='t' style='left:479.81px;top:927.76px;font-size:20.5px;font-weight:400;color:#4186ab;transform:scaleX(0.9950);'>06/06 15:15:15</div><div class='t' style='left:651.70px;top:927.76px;font-size:20.5px;font-weight:400;color:#4186ab;transform:scaleX(1.0000);'>end</div><div class='t' style='left:834.46px;top:927.76px;font-size:20.5px;font-weight:400;color:#4186ab;transform:scaleX(0.9435);'>Cloudflare_L3_Zone</div><div class='t' style='left:1049.06px;top:927.76px;font-size:20.5px;font-weight:400;color:#4186ab;transform:scaleX(0.9435);'>Cloudflare_L3_Zone</div><div class='t' style='left:1246.03px;top:927.76px;font-size:20.5px;font-weight:400;color:#4186ab;transform:scaleX(0.9688);'>172.64.240.254</div><div class='t' style='left:1437.03px;top:927.76px;font-size:20.5px;font-weight:400;color:#4186ab;transform:scaleX(0.9750);'>108.162.217.182</div><div class='t' style='left:1627.04px;top:927.76px;font-size:20.5px;font-weight:400;color:#4186ab;transform:scaleX(0.9580);'>0</div><div class='t' style='left:1708.73px;top:927.76px;font-size:20.5px;font-weight:400;color:#4186ab;transform:scaleX(0.9690);'>icmp</div><div class='t' style='left:1889.66px;top:927.76px;font-size:20.5px;font-weight:400;color:#4186ab;transform:scaleX(0.9400);'>al</div><svg style='position:absolute;left:381px;top:919px;overflow:visible' width='27' height='27' viewBox='0 0 27 27'><path d='M1,1 h12.5 l4.5,4.5 v13.5 h-17 z' fill='#eef8fd' stroke='#3a86b6' stroke-width='2'/><rect x='3.6' y='5.2' width='2.3' height='2.3' rx='1' fill='#2f6a8a'/><rect x='3.6' y='9' width='2.3' height='2.3' rx='1' fill='#2f6a8a'/><rect x='3.6' y='12.8' width='2.3' height='2.3' rx='1' fill='#2f6a8a'/><rect x='7.2' y='5.4' width='5' height='1.8' fill='#3a78a8'/><rect x='7.2' y='9.2' width='4' height='1.8' fill='#3a78a8'/><rect x='7.2' y='13' width='4' height='1.8' fill='#3a78a8'/><path d='M10.8,17.2 L5,25' stroke='#d6983a' stroke-width='3.6' stroke-linecap='round'/><circle cx='18.6' cy='11.3' r='7' fill='#dcf2fb' stroke='#8d97a6' stroke-width='1.7'/><circle cx='17.5' cy='10' r='3' fill='#ffffff' opacity='.6'/></svg><div class='t' style='left:479.81px;top:971.38px;font-size:20.5px;font-weight:400;color:#4186ab;transform:scaleX(0.9950);'>06/06 15:15:14</div><div class='t' style='left:651.70px;top:971.38px;font-size:20.5px;font-weight:400;color:#4186ab;transform:scaleX(1.0000);'>end</div><div class='t' style='left:834.46px;top:971.38px;font-size:20.5px;font-weight:400;color:#4186ab;transform:scaleX(0.9435);'>Cloudflare_L3_Zone</div><div class='t' style='left:1049.06px;top:971.38px;font-size:20.5px;font-weight:400;color:#4186ab;transform:scaleX(0.9435);'>Cloudflare_L3_Zone</div><div class='t' style='left:1246.03px;top:971.38px;font-size:20.5px;font-weight:400;color:#4186ab;transform:scaleX(0.9688);'>172.64.240.253</div><div class='t' style='left:1437.03px;top:971.38px;font-size:20.5px;font-weight:400;color:#4186ab;transform:scaleX(0.9750);'>172.71.153.150</div><div class='t' style='left:1627.04px;top:971.38px;font-size:20.5px;font-weight:400;color:#4186ab;transform:scaleX(0.9580);'>0</div><div class='t' style='left:1708.73px;top:971.38px;font-size:20.5px;font-weight:400;color:#4186ab;transform:scaleX(0.9690);'>icmp</div><div class='t' style='left:1889.66px;top:971.38px;font-size:20.5px;font-weight:400;color:#4186ab;transform:scaleX(0.9400);'>al</div><svg style='position:absolute;left:381px;top:962px;overflow:visible' width='27' height='27' viewBox='0 0 27 27'><path d='M1,1 h12.5 l4.5,4.5 v13.5 h-17 z' fill='#eef8fd' stroke='#3a86b6' stroke-width='2'/><rect x='3.6' y='5.2' width='2.3' height='2.3' rx='1' fill='#2f6a8a'/><rect x='3.6' y='9' width='2.3' height='2.3' rx='1' fill='#2f6a8a'/><rect x='3.6' y='12.8' width='2.3' height='2.3' rx='1' fill='#2f6a8a'/><rect x='7.2' y='5.4' width='5' height='1.8' fill='#3a78a8'/><rect x='7.2' y='9.2' width='4' height='1.8' fill='#3a78a8'/><rect x='7.2' y='13' width='4' height='1.8' fill='#3a78a8'/><path d='M10.8,17.2 L5,25' stroke='#d6983a' stroke-width='3.6' stroke-linecap='round'/><circle cx='18.6' cy='11.3' r='7' fill='#dcf2fb' stroke='#8d97a6' stroke-width='1.7'/><circle cx='17.5' cy='10' r='3' fill='#ffffff' opacity='.6'/></svg><div class='t' style='left:479.81px;top:1015.00px;font-size:20.5px;font-weight:400;color:#4186ab;transform:scaleX(0.9950);'>06/06 15:15:14</div><div class='t' style='left:651.70px;top:1015.00px;font-size:20.5px;font-weight:400;color:#4186ab;transform:scaleX(1.0000);'>end</div><div class='t' style='left:834.46px;top:1015.00px;font-size:20.5px;font-weight:400;color:#4186ab;transform:scaleX(0.9435);'>Cloudflare_L3_Zone</div><div class='t' style='left:1049.06px;top:1015.00px;font-size:20.5px;font-weight:400;color:#4186ab;transform:scaleX(0.9435);'>Cloudflare_L3_Zone</div><div class='t' style='left:1246.03px;top:1015.00px;font-size:20.5px;font-weight:400;color:#4186ab;transform:scaleX(0.9688);'>172.64.240.253</div><div class='t' style='left:1437.03px;top:1015.00px;font-size:20.5px;font-weight:400;color:#4186ab;transform:scaleX(0.9750);text-decoration:underline'>172.70.177.42</div><div class='t' style='left:1627.04px;top:1015.00px;font-size:20.5px;font-weight:400;color:#4186ab;transform:scaleX(0.9580);'>0</div><div class='t' style='left:1708.73px;top:1015.00px;font-size:20.5px;font-weight:400;color:#4186ab;transform:scaleX(0.9690);'>icmp</div><div class='t' style='left:1889.66px;top:1015.00px;font-size:20.5px;font-weight:400;color:#4186ab;transform:scaleX(0.9400);'>al</div><svg style='position:absolute;left:381px;top:1006px;overflow:visible' width='27' height='27' viewBox='0 0 27 27'><path d='M1,1 h12.5 l4.5,4.5 v13.5 h-17 z' fill='#eef8fd' stroke='#3a86b6' stroke-width='2'/><rect x='3.6' y='5.2' width='2.3' height='2.3' rx='1' fill='#2f6a8a'/><rect x='3.6' y='9' width='2.3' height='2.3' rx='1' fill='#2f6a8a'/><rect x='3.6' y='12.8' width='2.3' height='2.3' rx='1' fill='#2f6a8a'/><rect x='7.2' y='5.4' width='5' height='1.8' fill='#3a78a8'/><rect x='7.2' y='9.2' width='4' height='1.8' fill='#3a78a8'/><rect x='7.2' y='13' width='4' height='1.8' fill='#3a78a8'/><path d='M10.8,17.2 L5,25' stroke='#d6983a' stroke-width='3.6' stroke-linecap='round'/><circle cx='18.6' cy='11.3' r='7' fill='#dcf2fb' stroke='#8d97a6' stroke-width='1.7'/><circle cx='17.5' cy='10' r='3' fill='#ffffff' opacity='.6'/></svg><div class='t' style='left:479.81px;top:1058.62px;font-size:20.5px;font-weight:400;color:#4186ab;transform:scaleX(0.9950);'>06/06 15:15:14</div><div class='t' style='left:651.70px;top:1058.62px;font-size:20.5px;font-weight:400;color:#4186ab;transform:scaleX(1.0000);'>end</div><div class='t' style='left:834.46px;top:1058.62px;font-size:20.5px;font-weight:400;color:#4186ab;transform:scaleX(0.9435);'>Cloudflare_L3_Zone</div><div class='t' style='left:1049.06px;top:1058.62px;font-size:20.5px;font-weight:400;color:#4186ab;transform:scaleX(0.9435);'>Cloudflare_L3_Zone</div><div class='t' style='left:1246.03px;top:1058.62px;font-size:20.5px;font-weight:400;color:#4186ab;transform:scaleX(0.9688);'>172.64.240.253</div><div class='t' style='left:1437.03px;top:1058.62px;font-size:20.5px;font-weight:400;color:#4186ab;transform:scaleX(0.9750);'>141.101.93.76</div><div class='t' style='left:1627.04px;top:1058.62px;font-size:20.5px;font-weight:400;color:#4186ab;transform:scaleX(0.9580);'>0</div><div class='t' style='left:1708.73px;top:1058.62px;font-size:20.5px;font-weight:400;color:#4186ab;transform:scaleX(0.9690);'>icmp</div><div class='t' style='left:1889.66px;top:1058.62px;font-size:20.5px;font-weight:400;color:#4186ab;transform:scaleX(0.9400);'>al</div><svg style='position:absolute;left:381px;top:1050px;overflow:visible' width='27' height='27' viewBox='0 0 27 27'><path d='M1,1 h12.5 l4.5,4.5 v13.5 h-17 z' fill='#eef8fd' stroke='#3a86b6' stroke-width='2'/><rect x='3.6' y='5.2' width='2.3' height='2.3' rx='1' fill='#2f6a8a'/><rect x='3.6' y='9' width='2.3' height='2.3' rx='1' fill='#2f6a8a'/><rect x='3.6' y='12.8' width='2.3' height='2.3' rx='1' fill='#2f6a8a'/><rect x='7.2' y='5.4' width='5' height='1.8' fill='#3a78a8'/><rect x='7.2' y='9.2' width='4' height='1.8' fill='#3a78a8'/><rect x='7.2' y='13' width='4' height='1.8' fill='#3a78a8'/><path d='M10.8,17.2 L5,25' stroke='#d6983a' stroke-width='3.6' stroke-linecap='round'/><circle cx='18.6' cy='11.3' r='7' fill='#dcf2fb' stroke='#8d97a6' stroke-width='1.7'/><circle cx='17.5' cy='10' r='3' fill='#ffffff' opacity='.6'/></svg><div class='t' style='left:479.81px;top:1102.24px;font-size:20.5px;font-weight:400;color:#4186ab;transform:scaleX(0.9950);'>06/06 15:15:14</div><div class='t' style='left:651.70px;top:1102.24px;font-size:20.5px;font-weight:400;color:#4186ab;transform:scaleX(1.0000);'>end</div><div class='t' style='left:834.46px;top:1102.24px;font-size:20.5px;font-weight:400;color:#4186ab;transform:scaleX(0.9435);'>Cloudflare_L3_Zone</div><div class='t' style='left:1049.06px;top:1102.24px;font-size:20.5px;font-weight:400;color:#4186ab;transform:scaleX(0.9435);'>Cloudflare_L3_Zone</div><div class='t' style='left:1246.03px;top:1102.24px;font-size:20.5px;font-weight:400;color:#4186ab;transform:scaleX(0.9688);'>172.64.240.254</div><div class='t' style='left:1437.03px;top:1102.24px;font-size:20.5px;font-weight:400;color:#4186ab;transform:scaleX(0.9750);'>141.101.93.76</div><div class='t' style='left:1627.04px;top:1102.24px;font-size:20.5px;font-weight:400;color:#4186ab;transform:scaleX(0.9580);'>0</div><div class='t' style='left:1708.73px;top:1102.24px;font-size:20.5px;font-weight:400;color:#4186ab;transform:scaleX(0.9690);'>icmp</div><div class='t' style='left:1889.66px;top:1102.24px;font-size:20.5px;font-weight:400;color:#4186ab;transform:scaleX(0.9400);'>al</div><svg style='position:absolute;left:381px;top:1093px;overflow:visible' width='27' height='27' viewBox='0 0 27 27'><path d='M1,1 h12.5 l4.5,4.5 v13.5 h-17 z' fill='#eef8fd' stroke='#3a86b6' stroke-width='2'/><rect x='3.6' y='5.2' width='2.3' height='2.3' rx='1' fill='#2f6a8a'/><rect x='3.6' y='9' width='2.3' height='2.3' rx='1' fill='#2f6a8a'/><rect x='3.6' y='12.8' width='2.3' height='2.3' rx='1' fill='#2f6a8a'/><rect x='7.2' y='5.4' width='5' height='1.8' fill='#3a78a8'/><rect x='7.2' y='9.2' width='4' height='1.8' fill='#3a78a8'/><rect x='7.2' y='13' width='4' height='1.8' fill='#3a78a8'/><path d='M10.8,17.2 L5,25' stroke='#d6983a' stroke-width='3.6' stroke-linecap='round'/><circle cx='18.6' cy='11.3' r='7' fill='#dcf2fb' stroke='#8d97a6' stroke-width='1.7'/><circle cx='17.5' cy='10' r='3' fill='#ffffff' opacity='.6'/></svg><div style='position:absolute;left:385px;top:1129px;width:643px;height:3px;background:#8e9193;border-radius:2px'></div><div style='position:absolute;left:367px;top:1138px;width:1538px;height:47px;background:#47535b;'></div><div style='position:absolute;left:367px;top:1185px;width:1538px;height:1px;background:#5d8aa6;'></div><div style='position:absolute;left:454px;top:1147px;width:2px;height:29px;background:#8a969e;'></div><div style='position:absolute;left:643px;top:1147px;width:2px;height:29px;background:#8a969e;'></div><div style='position:absolute;left:734px;top:1147px;width:2px;height:29px;background:#8a969e;'></div><div style='position:absolute;left:1183px;top:1147px;width:2px;height:29px;background:#8a969e;'></div><div style='position:absolute;left:1611px;top:1147px;width:2px;height:29px;background:#8a969e;'></div><div style='position:absolute;left:1794px;top:1147px;width:2px;height:29px;background:#8a969e;'></div><div class='t' style='left:778.80px;top:1164.60px;font-size:22.5px;font-weight:400;color:#e8eef1;transform:scaleX(0.7484);letter-spacing:0.6px;'>Resolve hostname</div><div class='t' style='left:985.09px;top:1165.30px;font-size:22.5px;font-weight:400;color:#e8eef1;transform:scaleX(0.7541);letter-spacing:0.6px;'>Highlight Policy Actions</div><div class='t' style='left:1200.80px;top:1162.00px;font-size:22.5px;font-weight:400;color:#e8eef1;transform:scaleX(0.7527);letter-spacing:0.6px;'>Test Policy Match</div><div class='t' style='left:1430.71px;top:1165.00px;font-size:22.5px;font-weight:400;color:#e8eef1;transform:scaleX(0.7436);letter-spacing:0.6px;'>Displaying logs 1 - 30</div><div class='t' style='left:1713.24px;top:1165.00px;font-size:22.5px;font-weight:400;color:#e8eef1;transform:scaleX(0.7560);letter-spacing:0.6px;'>per page</div><div style='position:absolute;left:1619px;top:1143px;width:54px;height:36px;background:#ffffff;'></div><div style='position:absolute;left:1672px;top:1143px;width:38px;height:36px;background:#dadcdd;box-sizing:border-box;border:1px solid #b9bdc0'></div><svg style='position:absolute;left:1681px;top:1156px;overflow:visible' width='19' height='11' viewBox='0 0 19 11'><path d='M0,0 h19 l-9.5,11 z' fill='#8c9094'/></svg><div class='t' style='left:1624.70px;top:1161.60px;font-size:20px;font-weight:400;color:#111111;transform:scaleX(1.0000);'>30</div><div style='position:absolute;left:1801px;top:1143px;width:72px;height:36px;background:#ffffff;'></div><div style='position:absolute;left:1872px;top:1143px;width:38px;height:36px;background:#dadcdd;box-sizing:border-box;border:1px solid #b9bdc0'></div><svg style='position:absolute;left:1881px;top:1156px;overflow:visible' width='19' height='11' viewBox='0 0 19 11'><path d='M0,0 h19 l-9.5,11 z' fill='#8c9094'/></svg><div class='t' style='left:1806.13px;top:1161.60px;font-size:20px;font-weight:400;color:#111111;transform:scaleX(1.0340);'>DESC</div><svg style='position:absolute;left:377px;top:1152px;overflow:visible' width='25' height='16' viewBox='0 0 25 16'><rect x='0' y='0' width='2' height='16' fill='#6a767e'/><path d='M12,0 v16 l-10,-8 z M24,0 v16 l-10,-8 z' fill='#7d888f'/></svg><svg style='position:absolute;left:420px;top:1152px;overflow:visible' width='13' height='16' viewBox='0 0 13 16'><path d='M12,0 v16 l-11,-8 z' fill='#7d888f'/></svg><svg style='position:absolute;left:665px;top:1153.5px;overflow:visible' width='12' height='15' viewBox='0 0 12 15'><path d='M0,0 l11,7.5 l-11,7.5 z' fill='#eef5e0'/><path d='M0,0 v15' stroke='#8ab040' stroke-width='1.2'/></svg><svg style='position:absolute;left:702px;top:1153.5px;overflow:visible' width='22' height='15' viewBox='0 0 22 15'><path d='M0,0 l10,7.5 l-10,7.5 z M12,0 l10,7.5 l-10,7.5 z' fill='#f2f4f5'/></svg><svg style='position:absolute;left:744px;top:1148px;overflow:visible' width='25' height='25' viewBox='0 0 25 25'><rect x='1' y='1' width='23' height='23' fill='#ffffff' stroke='#c8ccd0' stroke-width='2'/></svg><svg style='position:absolute;left:950px;top:1148px;overflow:visible' width='25' height='25' viewBox='0 0 25 25'><rect x='1' y='1' width='23' height='23' fill='#ffffff' stroke='#c8ccd0' stroke-width='2'/><path d='M4,12 l6,7 l13,-17' fill='none' stroke='#2a6a9a' stroke-width='4'/></svg><svg style='position:absolute;left:1347px;top:1159px;overflow:visible' width='11' height='7' viewBox='0 0 11 7'><path d='M0,0 h11 l-5.5,7 z' fill='#f2f4f5'/></svg><div class='t' style='left:465.74px;top:1165.00px;font-size:22px;font-weight:400;color:#e2b63a;transform:scaleX(0.9300);-webkit-text-stroke:0.3px currentColor;'>1</div><div class='t' style='left:480.87px;top:1165.00px;font-size:22px;font-weight:400;color:#a9cb3a;transform:scaleX(0.9300);-webkit-text-stroke:0.3px currentColor;'>2</div><div class='t' style='left:495.77px;top:1165.00px;font-size:22px;font-weight:400;color:#a9cb3a;transform:scaleX(0.9300);-webkit-text-stroke:0.3px currentColor;'>3</div><div class='t' style='left:511.70px;top:1165.00px;font-size:22px;font-weight:400;color:#a9cb3a;transform:scaleX(0.9300);-webkit-text-stroke:0.3px currentColor;'>4</div><div class='t' style='left:526.47px;top:1165.00px;font-size:22px;font-weight:400;color:#a9cb3a;transform:scaleX(0.9300);-webkit-text-stroke:0.3px currentColor;'>5</div><div class='t' style='left:541.47px;top:1165.00px;font-size:22px;font-weight:400;color:#a9cb3a;transform:scaleX(0.9300);-webkit-text-stroke:0.3px currentColor;'>6</div><div class='t' style='left:557.17px;top:1165.00px;font-size:22px;font-weight:400;color:#a9cb3a;transform:scaleX(0.9300);-webkit-text-stroke:0.3px currentColor;'>7</div><div class='t' style='left:572.17px;top:1165.00px;font-size:22px;font-weight:400;color:#a9cb3a;transform:scaleX(0.9300);-webkit-text-stroke:0.3px currentColor;'>8</div><div class='t' style='left:587.07px;top:1165.00px;font-size:22px;font-weight:400;color:#a9cb3a;transform:scaleX(0.9300);-webkit-text-stroke:0.3px currentColor;'>9</div><div class='t' style='left:602.74px;top:1165.00px;font-size:22px;font-weight:400;color:#a9cb3a;transform:scaleX(0.9300);-webkit-text-stroke:0.3px currentColor;'>10</div><div style='position:absolute;left:364px;top:670px;width:3px;height:51px;background:#a3a7aa;'></div><div style='position:absolute;left:367px;top:664px;width:6px;height:63px;background:#eceeef;border-radius:0 3px 3px 0'></div><svg style='position:absolute;left:367px;top:691px;overflow:visible' width='5' height='9' viewBox='0 0 5 9'><path d='M5,0 v9 l-5,-4.5 z' fill='#a8acae'/></svg><div style='position:absolute;left:0px;top:1186px;width:1905px;height:52px;background:#2a3239;'></div><div class='t' style='left:13.66px;top:1209.00px;font-size:22.5px;font-weight:400;color:#c8cfd3;transform:scaleX(0.7355);letter-spacing:0.6px;'>admin</div><div style='position:absolute;left:73px;top:1201px;width:2px;height:22px;background:#c8cfd3;'></div><div class='t' style='left:84.47px;top:1209.00px;font-size:22.5px;font-weight:400;color:#c8cfd3;transform:scaleX(0.8254);letter-spacing:0.6px;'>logout</div><div style='position:absolute;left:150px;top:1201px;width:2px;height:22px;background:#c8cfd3;'></div><div class='t' style='left:161.10px;top:1212.40px;font-size:22.5px;font-weight:400;color:#c8cfd3;transform:scaleX(0.8020);letter-spacing:0.6px;'>Last Login Time: 06/05/2023 18:36:46</div><svg style='position:absolute;left:1722px;top:1199px;overflow:visible' width='29' height='28' viewBox='0 0 29 28'><rect x='0' y='0' width='7' height='28' fill='#2f5a7a'/><rect x='1.5' y='2.5' width='4' height='4' fill='#e8f4ff'/><rect x='1.5' y='11.5' width='4' height='4' fill='#e8f4ff'/><rect x='1.5' y='20.5' width='4' height='4' fill='#e8f4ff'/><rect x='10' y='3.5' width='17' height='2' fill='#e8f0f4'/><rect x='10' y='12.5' width='4' height='2' fill='#e8f0f4'/><rect x='10' y='21.5' width='4' height='2' fill='#e8f0f4'/><rect x='18.4' y='12.100000000000001' width='3.2' height='4' fill='#f5b51a' stroke='#b87a10' stroke-width='.6' transform='rotate(0 20 19.5)'/><rect x='18.4' y='12.100000000000001' width='3.2' height='4' fill='#f5b51a' stroke='#b87a10' stroke-width='.6' transform='rotate(45 20 19.5)'/><rect x='18.4' y='12.100000000000001' width='3.2' height='4' fill='#f5b51a' stroke='#b87a10' stroke-width='.6' transform='rotate(90 20 19.5)'/><rect x='18.4' y='12.100000000000001' width='3.2' height='4' fill='#f5b51a' stroke='#b87a10' stroke-width='.6' transform='rotate(135 20 19.5)'/><rect x='18.4' y='12.100000000000001' width='3.2' height='4' fill='#f5b51a' stroke='#b87a10' stroke-width='.6' transform='rotate(180 20 19.5)'/><rect x='18.4' y='12.100000000000001' width='3.2' height='4' fill='#f5b51a' stroke='#b87a10' stroke-width='.6' transform='rotate(225 20 19.5)'/><rect x='18.4' y='12.100000000000001' width='3.2' height='4' fill='#f5b51a' stroke='#b87a10' stroke-width='.6' transform='rotate(270 20 19.5)'/><rect x='18.4' y='12.100000000000001' width='3.2' height='4' fill='#f5b51a' stroke='#b87a10' stroke-width='.6' transform='rotate(315 20 19.5)'/><circle cx='20' cy='19.5' r='5.2' fill='#f5b51a' stroke='#b87a10' stroke-width='.8'/><circle cx='20' cy='19.5' r='1.82' fill='#8a5a10'/></svg><div class='t' style='left:1755.40px;top:1212.00px;font-size:22.5px;font-weight:400;color:#c8cfd3;transform:scaleX(0.7763);letter-spacing:0.6px;'>Tasks</div><div style='position:absolute;left:1813px;top:1200px;width:2px;height:24px;background:#c8cfd3;'></div><div class='t' style='left:1824.98px;top:1212.00px;font-size:22.5px;font-weight:400;color:#c8cfd3;transform:scaleX(0.7624);letter-spacing:0.6px;'>Language</div><div style='position:absolute;left:-1px;top:1207px;width:139px;height:40px;background:#262626;box-sizing:border-box;border:1px solid #5a5a5a'></div><div class='t' style='left:1.45px;top:1224.40px;font-size:18px;font-weight:400;color:#f0f0f0;transform:scaleX(0.9522);'>javascript:void(0)</div><div style='position:absolute;left:386px;top:179px;width:596px;height:62px;box-sizing:border-box;border:6px solid #ef4444;border-radius:10px;filter:drop-shadow(1px 3px 2.5px rgba(0,0,0,.45))'></div><div style='position:absolute;left:360px;top:343.5px;width:64px;height:43.0px;box-sizing:border-box;border:6px solid #ef4444;border-radius:9px;filter:drop-shadow(1px 3px 2.5px rgba(0,0,0,.45))'></div><div style='position:absolute;left:826.5px;top:336px;width:409.5px;height:45.69999999999999px;box-sizing:border-box;border:6px solid #ef4444;border-radius:9px;filter:drop-shadow(1px 3px 2.5px rgba(0,0,0,.45))'></div><div style='position:absolute;left:1237.3px;top:335.2px;width:164.29999999999995px;height:46.19999999999999px;box-sizing:border-box;border:6px solid #ef4444;border-radius:9px;filter:drop-shadow(1px 3px 2.5px rgba(0,0,0,.45))'></div><div style='position:absolute;left:1237.3px;top:507.9px;width:164.29999999999995px;height:46.700000000000045px;box-sizing:border-box;border:6px solid #ef4444;border-radius:9px;filter:drop-shadow(1px 3px 2.5px rgba(0,0,0,.45))'></div><svg style='position:absolute;left:0;top:0;overflow:visible;filter:drop-shadow(1px 3px 2.5px rgba(0,0,0,.45))' width='1' height='1'><path d='M441.2,386.4 L466.6,392.4 L461.3,398.5 L572.5,494.5 Q573,500 567.9,499.9 L456.7,403.9 L451.5,410 Z' fill='#ef4444' stroke='#ef4444' stroke-width='1.5' stroke-linejoin='round'/></svg>
</body></html>
